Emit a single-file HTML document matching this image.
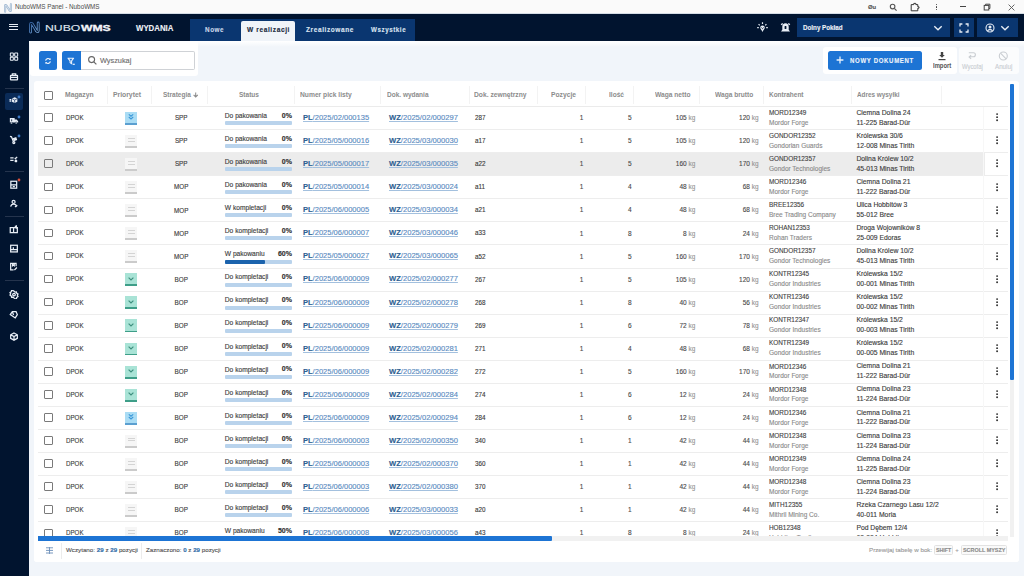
<!DOCTYPE html>
<html><head><meta charset="utf-8"><title>NuboWMS</title>
<style>html,body{margin:0;padding:0;width:1024px;height:576px;overflow:hidden;background:#eff3f8;font-family:'Liberation Sans', sans-serif;}
body{position:relative} b{font-weight:700} div{-webkit-text-stroke:0.12px currentColor}</style></head>
<body>
<div style="position:absolute;left:0.00px;top:0.00px;width:1024.00px;height:14.00px;background:#fafafa;"></div><div style="position:absolute;left:0.00px;top:13.20px;width:1024.00px;height:0.80px;background:#d5dde6;"></div><div style="position:absolute;left:0.00px;top:14.00px;width:1024.00px;height:27.30px;background:#01142f;"></div><div style="position:absolute;left:0.00px;top:41.00px;width:29.00px;height:535.00px;background:#01142f;"></div><div style="position:absolute;left:29.00px;top:41.30px;width:995.00px;height:534.70px;background:#f1f5fa;"></div><div style="position:absolute;left:29.00px;top:41.30px;width:995.00px;height:5.70px;background:linear-gradient(#ffffff,rgba(255,255,255,0));"></div><svg style="position:absolute;left:3px;top:2.5px" width="10" height="10" viewBox="0 0 10 10"><path d="M2.1 8.6V3Q2.1 1.4 3.4 2.5L6.6 7.5Q7.9 8.6 7.9 7V1.4" fill="none" stroke="#93afcc" stroke-width="2.1" stroke-linejoin="round" stroke-linecap="round"/><path d="M2.1 8.6V3Q2.1 1.4 3.4 2.5L6.6 7.5Q7.9 8.6 7.9 7V1.4" fill="none" stroke="#fafafa" stroke-width=".7" stroke-linejoin="round" stroke-linecap="round"/></svg><div style="position:absolute;left:14.75px;top:0.97px;height:12px;line-height:12px;font-family:'Liberation Sans', sans-serif;font-size:7px;font-weight:400;color:#4a4a4a;letter-spacing:0px;white-space:nowrap;-webkit-text-stroke:0;transform:scaleX(0.9022);transform-origin:0 0;">NuboWMS Panel - NuboWMS</div><div style="position:absolute;left:867.80px;top:1.29px;height:12px;line-height:12px;font-family:'Liberation Sans', sans-serif;font-size:5.5px;font-weight:700;color:#555;letter-spacing:0px;white-space:nowrap;;transform:scaleX(1.0732);transform-origin:0 0;">Øu</div><svg style="position:absolute;left:889px;top:3px" width="9" height="9" viewBox="0 0 9 9"><circle cx="3.6" cy="3.6" r="2.3" fill="none" stroke="#555" stroke-width="1.1"/><path d="M5.3 5.3l2.3 2.3" stroke="#555" stroke-width="1.2"/></svg><svg style="position:absolute;left:910px;top:2px" width="11" height="10" viewBox="0 0 11 10"><path d="M1.2 2.6h2.6v-1.2h2v1.2h2v2.2h1.2v1.4h-1.2v2.6h-6.6z" fill="none" stroke="#333" stroke-width="1"/></svg><div style="position:absolute;left:935.50px;top:3.70px;width:1.20px;height:1.20px;background:#333;border-radius:50%"></div><div style="position:absolute;left:935.50px;top:6.40px;width:1.20px;height:1.20px;background:#333;border-radius:50%"></div><div style="position:absolute;left:935.50px;top:9.10px;width:1.20px;height:1.20px;background:#333;border-radius:50%"></div><div style="position:absolute;left:960.00px;top:6.20px;width:6.00px;height:0.80px;background:#444;"></div><svg style="position:absolute;left:983px;top:3px" width="8" height="8" viewBox="0 0 8 8"><rect x="1.2" y="2.4" width="4.6" height="4.6" fill="none" stroke="#444" stroke-width="1"/><path d="M2.6 2.2V1.2h4.3v4.3H6" fill="none" stroke="#444" stroke-width="1"/></svg><svg style="position:absolute;left:1008px;top:3.5px" width="7" height="7" viewBox="0 0 7 7"><path d="M.6 .6l5.8 5.8M6.4 .6L.6 6.4" stroke="#555" stroke-width=".9"/></svg><div style="position:absolute;left:9.00px;top:23.85px;width:9.10px;height:1.10px;background:#e6ecf4;"></div><div style="position:absolute;left:9.00px;top:26.35px;width:9.10px;height:1.10px;background:#e6ecf4;"></div><div style="position:absolute;left:9.00px;top:28.85px;width:9.10px;height:1.10px;background:#e6ecf4;"></div><svg style="position:absolute;left:28px;top:21px" width="13" height="13" viewBox="0 0 13 13"><defs><linearGradient id="lg" x1="0" y1="0" x2="1" y2="1"><stop offset="0" stop-color="#3d6fb0"/><stop offset="1" stop-color="#7aa9dc"/></linearGradient></defs><path d="M2.6 11V3.4Q2.6 1.5 4.3 2.9L8.5 10Q10.2 11.5 10.2 9.6V2" fill="none" stroke="url(#lg)" stroke-width="2.8" stroke-linejoin="round" stroke-linecap="round"/><path d="M2.6 11V3.4Q2.6 1.5 4.3 2.9L8.5 10Q10.2 11.5 10.2 9.6V2" fill="none" stroke="#01142f" stroke-width="1.1" stroke-linejoin="round" stroke-linecap="round"/></svg><div style="position:absolute;left:45.00px;top:21.59px;height:12px;line-height:12px;font-family:'Liberation Sans', sans-serif;font-size:8.7px;font-weight:400;color:#dfe5ee;letter-spacing:0px;white-space:nowrap;;transform:scaleX(1.4058);transform-origin:0 0;">NUBO</div><div style="position:absolute;left:80.80px;top:21.59px;height:12px;line-height:12px;font-family:'Liberation Sans', sans-serif;font-size:8.7px;font-weight:700;color:#f4f6fa;letter-spacing:0px;white-space:nowrap;-webkit-text-stroke:0.3px currentColor;transform:scaleX(1.3987);transform-origin:0 0;">WMS</div><div style="position:absolute;left:135.60px;top:21.51px;height:12px;line-height:12px;font-family:'Liberation Sans', sans-serif;font-size:9.5px;font-weight:700;color:#eef2f7;letter-spacing:0px;white-space:nowrap;;transform:scaleX(0.8240);transform-origin:0 0;">WYDANIA</div><div style="position:absolute;left:190.30px;top:19.00px;width:224.30px;height:22.30px;background:#0a3670;"></div><div style="position:absolute;left:240.70px;top:21.00px;width:54.70px;height:20.30px;background:#f0f4f9;border-radius:2px 2px 0 0"></div><div style="position:absolute;left:204.80px;top:23.75px;height:12px;line-height:12px;font-family:'Liberation Sans', sans-serif;font-size:6.5px;font-weight:700;color:#c9d6e8;letter-spacing:0.6px;white-space:nowrap;;transform:scaleX(0.9722);transform-origin:0 0;">Nowe</div><div style="position:absolute;left:246.60px;top:24.25px;height:12px;line-height:12px;font-family:'Liberation Sans', sans-serif;font-size:6.5px;font-weight:700;color:#1b2a40;letter-spacing:0.6px;white-space:nowrap;;transform:scaleX(1.0092);transform-origin:0 0;">W realizacji</div><div style="position:absolute;left:306.00px;top:23.75px;height:12px;line-height:12px;font-family:'Liberation Sans', sans-serif;font-size:6.5px;font-weight:700;color:#dbe4f0;letter-spacing:0.6px;white-space:nowrap;;">Zrealizowane</div><div style="position:absolute;left:370.60px;top:23.75px;height:12px;line-height:12px;font-family:'Liberation Sans', sans-serif;font-size:6.5px;font-weight:700;color:#dbe4f0;letter-spacing:0.6px;white-space:nowrap;;transform:scaleX(0.9554);transform-origin:0 0;">Wszystkie</div><svg style="position:absolute;left:756px;top:21px" width="13" height="13" viewBox="0 0 13 13"><path d="M6.5 1.3v1.8M2.6 3.2l1.1 1.1M10.4 3.2L9.3 4.3M1.2 6.6h1.6M10.2 6.6h1.6" stroke="#e8eef6" stroke-width="1.2"/><path d="M4.2 6.8a2.3 2.3 0 1 1 4.6 0c0 1.2-1.4 2-2.3 4.1C5.6 8.8 4.2 8 4.2 6.8z" fill="#e8eef6"/><path d="M5.4 6.6l1.1 1 1.1-1" fill="none" stroke="#01142f" stroke-width=".9"/></svg><svg style="position:absolute;left:779px;top:21px" width="13" height="13" viewBox="0 0 13 13"><path d="M6.5 2.2c2 0 3.2 1.4 3.2 3.4v3.2l1.3 1.6H2l1.3-1.6V5.6c0-2 1.2-3.4 3.2-3.4z" fill="#e8eef6"/><path d="M2.2 3.8l1.5-1.4M10.8 3.8L9.3 2.4" stroke="#e8eef6" stroke-width="1.4"/><rect x="5.6" y="5" width="1.8" height="3" rx=".5" fill="#01142f"/></svg><div style="position:absolute;left:797.00px;top:18.00px;width:153.30px;height:19.00px;background:#0a3670;"></div><div style="position:absolute;left:803.40px;top:21.87px;height:12px;line-height:12px;font-family:'Liberation Sans', sans-serif;font-size:7px;font-weight:700;color:#eef2f8;letter-spacing:0px;white-space:nowrap;;transform:scaleX(0.8930);transform-origin:0 0;">Dolny Pokład</div><svg style="position:absolute;left:933px;top:25px" width="10" height="6" viewBox="0 0 10 6"><path d="M1.3 1.3L5 4.7l3.7-3.4" fill="none" stroke="#e8eef6" stroke-width="1.4"/></svg><div style="position:absolute;left:954.40px;top:18.00px;width:19.20px;height:19.00px;background:#0a3670;"></div><svg style="position:absolute;left:959px;top:22.5px" width="10" height="10" viewBox="0 0 10 10"><path d="M1 3.4V1h2.4M6.6 1H9v2.4M9 6.6V9H6.6M3.4 9H1V6.6" fill="none" stroke="#e8eef6" stroke-width="1.3"/></svg><div style="position:absolute;left:977.30px;top:18.00px;width:40.70px;height:19.00px;background:#0a3670;"></div><svg style="position:absolute;left:985px;top:22.5px" width="10" height="10" viewBox="0 0 10 10"><circle cx="5" cy="5" r="4" fill="none" stroke="#e8eef6" stroke-width="1.1"/><circle cx="5" cy="4" r="1.5" fill="#e8eef6"/><path d="M2.4 7.8c1.5-1.6 3.7-1.6 5.2 0" fill="none" stroke="#e8eef6" stroke-width="1.1"/></svg><svg style="position:absolute;left:1000px;top:25px" width="10" height="6" viewBox="0 0 10 6"><path d="M1.3 1.3L5 4.7l3.7-3.4" fill="none" stroke="#e8eef6" stroke-width="1.4"/></svg><div style="position:absolute;left:4.50px;top:93.20px;width:18.10px;height:16.70px;background:#0a2b58;border-radius:2px"></div><div style="position:absolute;left:5.00px;top:88.20px;width:19.00px;height:1.00px;background:#25344d;"></div><div style="position:absolute;left:5.00px;top:171.30px;width:19.00px;height:1.00px;background:#25344d;"></div><div style="position:absolute;left:5.00px;top:215.90px;width:19.00px;height:1.00px;background:#25344d;"></div><div style="position:absolute;left:5.00px;top:279.90px;width:19.00px;height:1.00px;background:#25344d;"></div><svg style="position:absolute;left:9px;top:52.20px" width="10" height="9.2" viewBox="0 0 12 11"><rect x="1.6" y="1.2" width="3.6" height="3.8" rx=".6" fill="none" stroke="#e8eef6" stroke-width="1.25"/><rect x="6.8" y="1.2" width="3.6" height="3.8" rx=".6" fill="none" stroke="#e8eef6" stroke-width="1.25"/><rect x="1.6" y="6.2" width="3.6" height="3.8" rx=".6" fill="none" stroke="#e8eef6" stroke-width="1.25"/><rect x="6.8" y="6.2" width="3.6" height="3.8" rx=".6" fill="none" stroke="#e8eef6" stroke-width="1.25"/></svg><svg style="position:absolute;left:9px;top:71.60px" width="10" height="9.2" viewBox="0 0 12 11"><rect x="1.8" y="4" width="8.4" height="5.5" rx=".6" fill="none" stroke="#e8eef6" stroke-width="1.5"/><path d="M4 4V2.2h4V4M1.8 6.3h8.4" fill="none" stroke="#e8eef6" stroke-width="1.5"/></svg><svg style="position:absolute;left:9px;top:96.40px" width="10" height="9.2" viewBox="0 0 12 11"><path d="M3.6 3.1L6.8 1.6l3.2 1.5v3.8L6.8 8.5 3.6 6.9z" fill="#e8eef6"/><path d="M3.8 3.3l3 1.5 3-1.5M6.8 4.8v3.4" fill="none" stroke="#0a2d5e" stroke-width=".8"/><path d="M.6 4.2h2.2M.6 6.2h2.2" fill="none" stroke="#e8eef6" stroke-width="1.5"/></svg><svg style="position:absolute;left:17px;top:94.70px" width="4" height="4" viewBox="0 0 4 4"><circle cx="2" cy="2" r="1.4" fill="#3d78c2"/></svg><svg style="position:absolute;left:9px;top:116.40px" width="10" height="9.2" viewBox="0 0 12 11"><path d="M1 2.5h5.8v5.3H1zM6.8 4.2h2.4l1.8 2v1.6H6.8z" fill="#e8eef6"/><path d="M3.2 4v2" stroke="#01142f" stroke-width="1"/><circle cx="3" cy="8.4" r="1.2" fill="#e8eef6" stroke="#01142f" stroke-width=".6"/><circle cx="8.6" cy="8.4" r="1.2" fill="#e8eef6" stroke="#01142f" stroke-width=".6"/></svg><svg style="position:absolute;left:17px;top:114.70px" width="4" height="4" viewBox="0 0 4 4"><circle cx="2" cy="2" r="1.4" fill="#3d78c2"/></svg><svg style="position:absolute;left:9px;top:135.40px" width="10" height="9.2" viewBox="0 0 12 11"><path d="M1.2 1.6l1.8.6 2.5 6.3" fill="none" stroke="#e8eef6" stroke-width="1.5"/><rect x="5" y="3.2" width="4.4" height="3.6" transform="rotate(-20 7 5)" fill="#e8eef6"/><circle cx="5.8" cy="9" r="1.2" fill="none" stroke="#e8eef6" stroke-width="1.5"/></svg><svg style="position:absolute;left:17px;top:133.70px" width="4" height="4" viewBox="0 0 4 4"><circle cx="2" cy="2" r="1.4" fill="#3d78c2"/></svg><svg style="position:absolute;left:9px;top:155.40px" width="10" height="9.2" viewBox="0 0 12 11"><path d="M1.5 3.5h4M1.5 6.5h4M6.8 3.4l1 1 2-2.2M7 5.8l2.6 2.6M9.6 5.8L7 8.4" fill="none" stroke="#e8eef6" stroke-width="1.5"/></svg><svg style="position:absolute;left:9px;top:179.70px" width="10" height="9.2" viewBox="0 0 12 11"><rect x="2.2" y="1.5" width="7" height="8.3" fill="none" stroke="#e8eef6" stroke-width="1.5"/><path d="M2.2 5.8h7M4.5 7.8h2.5" fill="none" stroke="#e8eef6" stroke-width="1.5"/></svg><svg style="position:absolute;left:17px;top:178.00px" width="4" height="4" viewBox="0 0 4 4"><circle cx="2" cy="2" r="1.4" fill="#d9503a"/></svg><svg style="position:absolute;left:9px;top:199.40px" width="10" height="9.2" viewBox="0 0 12 11"><circle cx="5.5" cy="3.5" r="1.8" fill="none" stroke="#e8eef6" stroke-width="1.5"/><path d="M2 9c.4-2 2-3 3.5-3s2.6.6 3 1.6M7.2 8.3l1 .9 1.7-1.7" fill="none" stroke="#e8eef6" stroke-width="1.5"/></svg><svg style="position:absolute;left:9px;top:225.00px" width="10" height="9.2" viewBox="0 0 12 11"><path d="M1.5 3h4v6h-4zM5.5 3h4.5v6H5.5M7 2l1.8-.8v3.3" fill="none" stroke="#e8eef6" stroke-width="1.5"/></svg><svg style="position:absolute;left:9px;top:243.70px" width="10" height="9.2" viewBox="0 0 12 11"><rect x="2" y="1.5" width="8" height="8" fill="none" stroke="#e8eef6" stroke-width="1.5"/><path d="M2 6.8h8M5.2 4v2.8" fill="none" stroke="#e8eef6" stroke-width="1.5"/></svg><svg style="position:absolute;left:9px;top:261.80px" width="10" height="9.2" viewBox="0 0 12 11"><path d="M8.5 5V1.5h-6.5v8h3.5" fill="none" stroke="#e8eef6" stroke-width="1.5"/><path d="M4.3 1.5v3l1-.8 1 .8v-3M6.5 9.6l3-3" fill="none" stroke="#e8eef6" stroke-width="1.5"/></svg><svg style="position:absolute;left:9px;top:289.70px" width="10" height="9.2" viewBox="0 0 12 11"><path d="M6 1.3l1.2 1.3 1.7-.3.4 1.7 1.5.9-.8 1.5.8 1.5-1.5.9-.4 1.7-1.7-.3L6 9.7 4.8 8.4l-1.7.3-.4-1.7-1.5-.9.8-1.5-.8-1.5 1.5-.9.4-1.7 1.7.3z" fill="none" stroke="#e8eef6" stroke-width="1.5"/><circle cx="6" cy="5.5" r="1.6" fill="none" stroke="#e8eef6" stroke-width="1.5"/></svg><svg style="position:absolute;left:9px;top:310.40px" width="10" height="9.2" viewBox="0 0 12 11"><path d="M1.5 5.5L4 2h4.5L10 5.5 7.5 9.5z" fill="none" stroke="#e8eef6" stroke-width="1.5"/><path d="M4 2l1.5 4" fill="none" stroke="#e8eef6" stroke-width="1.5"/></svg><svg style="position:absolute;left:9px;top:332.10px" width="10" height="9.2" viewBox="0 0 12 11"><path d="M6 1.2l4 2.1v4.4L6 9.8 2 7.7V3.3zM2 3.3l4 2.2 4-2.2M6 5.5v4.3" fill="none" stroke="#e8eef6" stroke-width="1.5"/></svg><div style="position:absolute;left:30.00px;top:41.30px;width:168.00px;height:34.70px;background:#ffffff;border-radius:0 0 3px 3px"></div><div style="position:absolute;left:38.60px;top:51.20px;width:18.70px;height:18.80px;background:#1d74d4;border-radius:2.5px"></div><svg style="position:absolute;left:44px;top:56.6px" width="8" height="8" viewBox="0 0 8 8"><path d="M1.6 3.6A2.5 2.5 0 0 1 6 2.4M6.4 4.4A2.5 2.5 0 0 1 2 5.6" fill="none" stroke="#e9f1fb" stroke-width="1.15"/><path d="M6.6 .9v2H4.6z" fill="#e9f1fb"/><path d="M1.4 7.1v-2h2z" fill="#e9f1fb"/></svg><div style="position:absolute;left:61.60px;top:51.20px;width:19.20px;height:19.20px;background:#1d74d4;border-radius:2.5px 0 0 2.5px"></div><svg style="position:absolute;left:67px;top:56.5px" width="9" height="9" viewBox="0 0 9 9"><path d="M1 1.2h5.6L4.6 3.9v2.8L3.1 5.6V3.9z" fill="none" stroke="#e9f1fb" stroke-width="1.1" stroke-linejoin="round"/><path d="M5.6 7.3h2.2" stroke="#e9f1fb" stroke-width="1.2"/></svg><div style="position:absolute;left:80.80px;top:51.30px;width:114.40px;height:19.10px;background:#ffffff;border:1px solid #cfd2d6;border-left:none;box-sizing:border-box;border-radius:0 2px 2px 0"></div><svg style="position:absolute;left:86.5px;top:55px" width="11" height="11" viewBox="0 0 11 11"><circle cx="4.6" cy="4.6" r="3" fill="none" stroke="#666" stroke-width="1.1"/><path d="M6.8 6.8l2.6 2.6" stroke="#666" stroke-width="1.2"/></svg><div style="position:absolute;left:100.20px;top:54.87px;height:12px;line-height:12px;font-family:'Liberation Sans', sans-serif;font-size:7px;font-weight:400;color:#6d6d6d;letter-spacing:0px;white-space:nowrap;;transform:scaleX(1.0472);transform-origin:0 0;">Wyszukaj</div><div style="position:absolute;left:823.00px;top:47.00px;width:133.50px;height:27.00px;background:#ffffff;border-radius:3px"></div><div style="position:absolute;left:959.00px;top:47.00px;width:59.50px;height:27.00px;background:#fbfcfd;border-radius:3px"></div><div style="position:absolute;left:828.00px;top:51.00px;width:93.50px;height:18.80px;background:#1d74d4;border-radius:2.5px"></div><svg style="position:absolute;left:835.6px;top:55.9px" width="8" height="8" viewBox="0 0 8 8"><path d="M4 .6v6.8M.6 4h6.8" stroke="#e9f1fb" stroke-width="1.3"/></svg><div style="position:absolute;left:849.50px;top:54.87px;height:12px;line-height:12px;font-family:'Liberation Sans', sans-serif;font-size:7px;font-weight:700;color:#eef4fb;letter-spacing:0.8px;white-space:nowrap;;transform:scaleX(0.8584);transform-origin:0 0;">NOWY DOKUMENT</div><svg style="position:absolute;left:937px;top:50.5px" width="10" height="10" viewBox="0 0 10 10"><path d="M3.8 1h2.4v3h1.6L5 6.8 2.2 4h1.6z" fill="#444"/><path d="M1.5 8.6h7" stroke="#444" stroke-width="1.2"/></svg><div style="position:absolute;left:932.70px;top:60.47px;height:12px;line-height:12px;font-family:'Liberation Sans', sans-serif;font-size:7px;font-weight:700;color:#555555;letter-spacing:0px;white-space:nowrap;-webkit-text-stroke:0;transform:scaleX(0.8402);transform-origin:0 0;">Import</div><svg style="position:absolute;left:967px;top:50.5px" width="10" height="10" viewBox="0 0 10 10"><path d="M1.8 1.8h4.6a2 2 0 0 1 0 4H2.3M4.1 4.1L2.1 6l2 1.9" fill="none" stroke="#c9cdd2" stroke-width="1.1"/></svg><div style="position:absolute;left:961.60px;top:60.65px;height:12px;line-height:12px;font-family:'Liberation Sans', sans-serif;font-size:6.5px;font-weight:400;color:#c9cdd2;letter-spacing:0px;white-space:nowrap;;transform:scaleX(0.9019);transform-origin:0 0;">Wycofaj</div><svg style="position:absolute;left:997.5px;top:50.5px" width="11" height="10" viewBox="0 0 11 10"><circle cx="5.3" cy="5" r="4" fill="none" stroke="#c9cdd2" stroke-width="1.1"/><path d="M2.5 2.2l5.6 5.6" stroke="#c9cdd2" stroke-width="1.1"/></svg><div style="position:absolute;left:994.60px;top:60.65px;height:12px;line-height:12px;font-family:'Liberation Sans', sans-serif;font-size:6.5px;font-weight:400;color:#c9cdd2;letter-spacing:0px;white-space:nowrap;;transform:scaleX(0.9570);transform-origin:0 0;">Anuluj</div><div style="position:absolute;left:33.50px;top:81.40px;width:985.00px;height:480.60px;background:#ffffff;border-radius:3px"></div><div style="position:absolute;left:38.00px;top:106.00px;width:970.00px;height:1.20px;background:#ebebeb;"></div><div style="position:absolute;left:43.90px;top:91.10px;width:8.80px;height:8.60px;background:transparent;border:1.3px solid #7a7a7a;box-sizing:border-box;border-radius:1px"></div><div style="position:absolute;left:107.00px;top:86.00px;width:1.00px;height:18.00px;background:#f3f3f3;"></div><div style="position:absolute;left:151.25px;top:86.00px;width:1.00px;height:18.00px;background:#f3f3f3;"></div><div style="position:absolute;left:207.00px;top:86.00px;width:1.00px;height:18.00px;background:#f3f3f3;"></div><div style="position:absolute;left:294.25px;top:86.00px;width:1.00px;height:18.00px;background:#f3f3f3;"></div><div style="position:absolute;left:380.00px;top:86.00px;width:1.00px;height:18.00px;background:#f3f3f3;"></div><div style="position:absolute;left:468.75px;top:86.00px;width:1.00px;height:18.00px;background:#f3f3f3;"></div><div style="position:absolute;left:536.75px;top:86.00px;width:1.00px;height:18.00px;background:#f3f3f3;"></div><div style="position:absolute;left:585.25px;top:86.00px;width:1.00px;height:18.00px;background:#f3f3f3;"></div><div style="position:absolute;left:632.75px;top:86.00px;width:1.00px;height:18.00px;background:#f3f3f3;"></div><div style="position:absolute;left:699.00px;top:86.00px;width:1.00px;height:18.00px;background:#f3f3f3;"></div><div style="position:absolute;left:762.75px;top:86.00px;width:1.00px;height:18.00px;background:#f3f3f3;"></div><div style="position:absolute;left:850.75px;top:86.00px;width:1.00px;height:18.00px;background:#f3f3f3;"></div><div style="position:absolute;left:941.25px;top:86.00px;width:1.00px;height:18.00px;background:#f3f3f3;"></div><div style="position:absolute;left:65.00px;top:88.84px;height:12px;line-height:12px;font-family:'Liberation Sans', sans-serif;font-size:6.8px;font-weight:700;color:#8c8c8c;letter-spacing:0px;white-space:nowrap;-webkit-text-stroke:0;">Magazyn</div><div style="position:absolute;left:113.00px;top:88.84px;height:12px;line-height:12px;font-family:'Liberation Sans', sans-serif;font-size:6.8px;font-weight:700;color:#8c8c8c;letter-spacing:0px;white-space:nowrap;-webkit-text-stroke:0;">Priorytet</div><div style="position:absolute;left:162.50px;top:88.84px;height:12px;line-height:12px;font-family:'Liberation Sans', sans-serif;font-size:6.8px;font-weight:700;color:#8c8c8c;letter-spacing:0px;white-space:nowrap;-webkit-text-stroke:0;transform:scaleX(0.9555);transform-origin:0 0;">Strategia</div><div style="position:absolute;left:238.75px;top:88.84px;height:12px;line-height:12px;font-family:'Liberation Sans', sans-serif;font-size:6.8px;font-weight:700;color:#8c8c8c;letter-spacing:0px;white-space:nowrap;-webkit-text-stroke:0;transform:scaleX(0.9624);transform-origin:0 0;">Status</div><div style="position:absolute;left:299.75px;top:88.84px;height:12px;line-height:12px;font-family:'Liberation Sans', sans-serif;font-size:6.8px;font-weight:700;color:#8c8c8c;letter-spacing:0px;white-space:nowrap;-webkit-text-stroke:0;transform:scaleX(0.9854);transform-origin:0 0;">Numer pick listy</div><div style="position:absolute;left:386.50px;top:88.84px;height:12px;line-height:12px;font-family:'Liberation Sans', sans-serif;font-size:6.8px;font-weight:700;color:#8c8c8c;letter-spacing:0px;white-space:nowrap;-webkit-text-stroke:0;transform:scaleX(0.9554);transform-origin:0 0;">Dok. wydania</div><div style="position:absolute;left:474.00px;top:88.84px;height:12px;line-height:12px;font-family:'Liberation Sans', sans-serif;font-size:6.8px;font-weight:700;color:#8c8c8c;letter-spacing:0px;white-space:nowrap;-webkit-text-stroke:0;transform:scaleX(0.9856);transform-origin:0 0;">Dok. zewnętrzny</div><div style="position:absolute;left:550.75px;top:88.84px;height:12px;line-height:12px;font-family:'Liberation Sans', sans-serif;font-size:6.8px;font-weight:700;color:#8c8c8c;letter-spacing:0px;white-space:nowrap;-webkit-text-stroke:0;transform:scaleX(0.9877);transform-origin:0 0;">Pozycje</div><div style="position:absolute;left:609.00px;top:88.84px;height:12px;line-height:12px;font-family:'Liberation Sans', sans-serif;font-size:6.8px;font-weight:700;color:#8c8c8c;letter-spacing:0px;white-space:nowrap;-webkit-text-stroke:0;transform:scaleX(0.9677);transform-origin:0 0;">Ilość</div><div style="position:absolute;left:654.50px;top:88.84px;height:12px;line-height:12px;font-family:'Liberation Sans', sans-serif;font-size:6.8px;font-weight:700;color:#8c8c8c;letter-spacing:0px;white-space:nowrap;-webkit-text-stroke:0;transform:scaleX(0.9759);transform-origin:0 0;">Waga netto</div><div style="position:absolute;left:715.00px;top:88.84px;height:12px;line-height:12px;font-family:'Liberation Sans', sans-serif;font-size:6.8px;font-weight:700;color:#8c8c8c;letter-spacing:0px;white-space:nowrap;-webkit-text-stroke:0;transform:scaleX(0.9710);transform-origin:0 0;">Waga brutto</div><div style="position:absolute;left:769.00px;top:88.84px;height:12px;line-height:12px;font-family:'Liberation Sans', sans-serif;font-size:6.8px;font-weight:700;color:#8c8c8c;letter-spacing:0px;white-space:nowrap;-webkit-text-stroke:0;transform:scaleX(0.9517);transform-origin:0 0;">Kontrahent</div><div style="position:absolute;left:856.75px;top:88.84px;height:12px;line-height:12px;font-family:'Liberation Sans', sans-serif;font-size:6.8px;font-weight:700;color:#8c8c8c;letter-spacing:0px;white-space:nowrap;-webkit-text-stroke:0;transform:scaleX(0.9373);transform-origin:0 0;">Adres wysyłki</div><svg style="position:absolute;left:193px;top:92px" width="5.4" height="5.6" viewBox="0 0 5.4 5.6"><path d="M2.7 .4v4.5M.6 2.9l2.1 2.1 2.1-2.1" fill="none" stroke="#8c8c8c" stroke-width="1.05"/></svg><div style="position:absolute;left:43.90px;top:113.30px;width:8.80px;height:8.60px;background:transparent;border:1.3px solid #7a7a7a;box-sizing:border-box;border-radius:1px"></div><div style="position:absolute;left:65.60px;top:111.97px;height:12px;line-height:12px;font-family:'Liberation Sans', sans-serif;font-size:7px;font-weight:400;color:#3a3a3a;letter-spacing:0px;white-space:nowrap;;transform:scaleX(0.8819);transform-origin:0 0;">DPOK</div><div style="position:absolute;left:125.10px;top:111.80px;width:11.90px;height:11.30px;background:#aadcf4;"></div><div style="position:absolute;left:125.10px;top:122.90px;width:11.90px;height:1.90px;background:#5b9fd0;"></div><svg style="position:absolute;left:127px;top:112.80px" width="8" height="8" viewBox="0 0 8 8"><path d="M1.8 1.3L4 3.2l2.2-1.9M1.8 4L4 5.9 6.2 4" fill="none" stroke="#3b98d8" stroke-width="1.1"/></svg><div style="position:absolute;left:174.90px;top:112.22px;height:12px;line-height:12px;font-family:'Liberation Sans', sans-serif;font-size:6.3px;font-weight:400;color:#3a3a3a;letter-spacing:0px;white-space:nowrap;;">SPP</div><div style="position:absolute;left:224.80px;top:109.80px;height:12px;line-height:12px;font-family:'Liberation Sans', sans-serif;font-size:6.65px;font-weight:400;color:#3a3a3a;letter-spacing:0px;white-space:nowrap;;">Do pakowania</div><div style="position:absolute;left:281.77px;top:109.67px;height:12px;line-height:12px;font-family:'Liberation Sans', sans-serif;font-size:7px;font-weight:700;color:#2e2e2e;letter-spacing:0px;white-space:nowrap;;">0%</div><div style="position:absolute;left:224.80px;top:121.10px;width:67.10px;height:4.00px;background:#b9d3ec;border-radius:1px"></div><div style="position:absolute;left:302.70px;top:111.97px;height:12px;line-height:12px;font-family:'Liberation Sans', sans-serif;font-size:7px;font-weight:400;color:#5a8bbf;letter-spacing:0px;white-space:nowrap;text-decoration:underline;text-decoration-color:#a3c0de;text-decoration-thickness:0.7px;text-underline-offset:0.6px;transform:scaleX(1.0745);transform-origin:0 0;"><b style="color:#2e5f92">PL</b>/2025/02/000135</div><div style="position:absolute;left:389.10px;top:111.97px;height:12px;line-height:12px;font-family:'Liberation Sans', sans-serif;font-size:7px;font-weight:400;color:#5a8bbf;letter-spacing:0px;white-space:nowrap;text-decoration:underline;text-decoration-color:#a3c0de;text-decoration-thickness:0.7px;text-underline-offset:0.6px;transform:scaleX(1.0858);transform-origin:0 0;"><b style="color:#2e5f92">WZ</b>/2025/02/000297</div><div style="position:absolute;left:475.00px;top:112.12px;height:12px;line-height:12px;font-family:'Liberation Sans', sans-serif;font-size:6.3px;font-weight:400;color:#3a3a3a;letter-spacing:0px;white-space:nowrap;;">287</div><div style="position:absolute;left:579.77px;top:112.15px;height:12px;line-height:12px;font-family:'Liberation Sans', sans-serif;font-size:6.5px;font-weight:400;color:#4a4a4a;letter-spacing:0px;white-space:nowrap;;">1</div><div style="position:absolute;left:627.88px;top:112.15px;height:12px;line-height:12px;font-family:'Liberation Sans', sans-serif;font-size:6.5px;font-weight:400;color:#4a4a4a;letter-spacing:0px;white-space:nowrap;;">5</div><div style="position:absolute;left:675.79px;top:112.15px;height:12px;line-height:12px;font-family:'Liberation Sans', sans-serif;font-size:6.5px;font-weight:400;color:#4a4a4a;letter-spacing:0px;white-space:nowrap;;">105 <span style="color:#939393;font-size:6.4px">kg</span></div><div style="position:absolute;left:739.09px;top:112.15px;height:12px;line-height:12px;font-family:'Liberation Sans', sans-serif;font-size:6.5px;font-weight:400;color:#4a4a4a;letter-spacing:0px;white-space:nowrap;;">120 <span style="color:#939393;font-size:6.4px">kg</span></div><div style="position:absolute;left:769.00px;top:106.78px;height:12px;line-height:12px;font-family:'Liberation Sans', sans-serif;font-size:6.4px;font-weight:400;color:#3f3f3f;letter-spacing:0px;white-space:nowrap;;">MORD12349</div><div style="position:absolute;left:769.00px;top:116.65px;height:12px;line-height:12px;font-family:'Liberation Sans', sans-serif;font-size:6.5px;font-weight:400;color:#8a8a8a;letter-spacing:0px;white-space:nowrap;;">Mordor Forge</div><div style="position:absolute;left:856.40px;top:106.64px;height:12px;line-height:12px;font-family:'Liberation Sans', sans-serif;font-size:6.8px;font-weight:400;color:#3a3a3a;letter-spacing:0px;white-space:nowrap;;">Ciemna Dolina 24</div><div style="position:absolute;left:856.40px;top:116.54px;height:12px;line-height:12px;font-family:'Liberation Sans', sans-serif;font-size:6.8px;font-weight:400;color:#3a3a3a;letter-spacing:0px;white-space:nowrap;;">11-225 Barad-Dûr</div><svg style="position:absolute;left:995px;top:112.30px" width="4.4" height="10" viewBox="0 0 4.4 10"><circle cx="2.1" cy="2.1" r=".95" fill="#333"/><circle cx="2.1" cy="5.15" r=".95" fill="#333"/><circle cx="2.1" cy="8.2" r=".95" fill="#333"/></svg><div style="position:absolute;left:38.00px;top:129.12px;width:970.00px;height:1.00px;background:#ededed;"></div><div style="position:absolute;left:43.90px;top:136.37px;width:8.80px;height:8.60px;background:transparent;border:1.3px solid #7a7a7a;box-sizing:border-box;border-radius:1px"></div><div style="position:absolute;left:65.60px;top:135.04px;height:12px;line-height:12px;font-family:'Liberation Sans', sans-serif;font-size:7px;font-weight:400;color:#3a3a3a;letter-spacing:0px;white-space:nowrap;;transform:scaleX(0.8819);transform-origin:0 0;">DPOK</div><div style="position:absolute;left:125.10px;top:134.87px;width:11.90px;height:11.30px;background:#f6f6f6;"></div><div style="position:absolute;left:125.10px;top:145.97px;width:11.90px;height:1.90px;background:#cbcbcb;"></div><div style="position:absolute;left:128.00px;top:137.87px;width:7.00px;height:1.00px;background:#d4d4d4;"></div><div style="position:absolute;left:128.00px;top:140.57px;width:7.00px;height:1.00px;background:#d4d4d4;"></div><div style="position:absolute;left:174.90px;top:135.29px;height:12px;line-height:12px;font-family:'Liberation Sans', sans-serif;font-size:6.3px;font-weight:400;color:#3a3a3a;letter-spacing:0px;white-space:nowrap;;">SPP</div><div style="position:absolute;left:224.80px;top:132.87px;height:12px;line-height:12px;font-family:'Liberation Sans', sans-serif;font-size:6.65px;font-weight:400;color:#3a3a3a;letter-spacing:0px;white-space:nowrap;;">Do pakowania</div><div style="position:absolute;left:281.77px;top:132.74px;height:12px;line-height:12px;font-family:'Liberation Sans', sans-serif;font-size:7px;font-weight:700;color:#2e2e2e;letter-spacing:0px;white-space:nowrap;;">0%</div><div style="position:absolute;left:224.80px;top:144.17px;width:67.10px;height:4.00px;background:#b9d3ec;border-radius:1px"></div><div style="position:absolute;left:302.70px;top:135.04px;height:12px;line-height:12px;font-family:'Liberation Sans', sans-serif;font-size:7px;font-weight:400;color:#5a8bbf;letter-spacing:0px;white-space:nowrap;text-decoration:underline;text-decoration-color:#a3c0de;text-decoration-thickness:0.7px;text-underline-offset:0.6px;transform:scaleX(1.0745);transform-origin:0 0;"><b style="color:#2e5f92">PL</b>/2025/05/000016</div><div style="position:absolute;left:389.10px;top:135.04px;height:12px;line-height:12px;font-family:'Liberation Sans', sans-serif;font-size:7px;font-weight:400;color:#5a8bbf;letter-spacing:0px;white-space:nowrap;text-decoration:underline;text-decoration-color:#a3c0de;text-decoration-thickness:0.7px;text-underline-offset:0.6px;transform:scaleX(1.0858);transform-origin:0 0;"><b style="color:#2e5f92">WZ</b>/2025/03/000030</div><div style="position:absolute;left:475.00px;top:135.19px;height:12px;line-height:12px;font-family:'Liberation Sans', sans-serif;font-size:6.3px;font-weight:400;color:#3a3a3a;letter-spacing:0px;white-space:nowrap;;">a17</div><div style="position:absolute;left:579.77px;top:135.22px;height:12px;line-height:12px;font-family:'Liberation Sans', sans-serif;font-size:6.5px;font-weight:400;color:#4a4a4a;letter-spacing:0px;white-space:nowrap;;">1</div><div style="position:absolute;left:627.88px;top:135.22px;height:12px;line-height:12px;font-family:'Liberation Sans', sans-serif;font-size:6.5px;font-weight:400;color:#4a4a4a;letter-spacing:0px;white-space:nowrap;;">5</div><div style="position:absolute;left:675.79px;top:135.22px;height:12px;line-height:12px;font-family:'Liberation Sans', sans-serif;font-size:6.5px;font-weight:400;color:#4a4a4a;letter-spacing:0px;white-space:nowrap;;">105 <span style="color:#939393;font-size:6.4px">kg</span></div><div style="position:absolute;left:739.09px;top:135.22px;height:12px;line-height:12px;font-family:'Liberation Sans', sans-serif;font-size:6.5px;font-weight:400;color:#4a4a4a;letter-spacing:0px;white-space:nowrap;;">120 <span style="color:#939393;font-size:6.4px">kg</span></div><div style="position:absolute;left:769.00px;top:129.85px;height:12px;line-height:12px;font-family:'Liberation Sans', sans-serif;font-size:6.4px;font-weight:400;color:#3f3f3f;letter-spacing:0px;white-space:nowrap;;">GONDOR12352</div><div style="position:absolute;left:769.00px;top:139.72px;height:12px;line-height:12px;font-family:'Liberation Sans', sans-serif;font-size:6.5px;font-weight:400;color:#8a8a8a;letter-spacing:0px;white-space:nowrap;;">Gondorian Guards</div><div style="position:absolute;left:856.40px;top:129.71px;height:12px;line-height:12px;font-family:'Liberation Sans', sans-serif;font-size:6.8px;font-weight:400;color:#3a3a3a;letter-spacing:0px;white-space:nowrap;;">Królewska 30/6</div><div style="position:absolute;left:856.40px;top:139.61px;height:12px;line-height:12px;font-family:'Liberation Sans', sans-serif;font-size:6.8px;font-weight:400;color:#3a3a3a;letter-spacing:0px;white-space:nowrap;;">12-008 Minas Tirith</div><svg style="position:absolute;left:995px;top:135.37px" width="4.4" height="10" viewBox="0 0 4.4 10"><circle cx="2.1" cy="2.1" r=".95" fill="#333"/><circle cx="2.1" cy="5.15" r=".95" fill="#333"/><circle cx="2.1" cy="8.2" r=".95" fill="#333"/></svg><div style="position:absolute;left:38.00px;top:152.64px;width:946.75px;height:23.07px;background:#ececec;"></div><div style="position:absolute;left:38.00px;top:152.19px;width:970.00px;height:1.00px;background:#ededed;"></div><div style="position:absolute;left:43.90px;top:159.44px;width:8.80px;height:8.60px;background:transparent;border:1.3px solid #7a7a7a;box-sizing:border-box;border-radius:1px"></div><div style="position:absolute;left:65.60px;top:158.11px;height:12px;line-height:12px;font-family:'Liberation Sans', sans-serif;font-size:7px;font-weight:400;color:#3a3a3a;letter-spacing:0px;white-space:nowrap;;transform:scaleX(0.8819);transform-origin:0 0;">DPOK</div><div style="position:absolute;left:125.10px;top:157.94px;width:11.90px;height:11.30px;background:#f6f6f6;"></div><div style="position:absolute;left:125.10px;top:169.04px;width:11.90px;height:1.90px;background:#cbcbcb;"></div><div style="position:absolute;left:128.00px;top:160.94px;width:7.00px;height:1.00px;background:#d4d4d4;"></div><div style="position:absolute;left:128.00px;top:163.64px;width:7.00px;height:1.00px;background:#d4d4d4;"></div><div style="position:absolute;left:174.90px;top:158.36px;height:12px;line-height:12px;font-family:'Liberation Sans', sans-serif;font-size:6.3px;font-weight:400;color:#3a3a3a;letter-spacing:0px;white-space:nowrap;;">SPP</div><div style="position:absolute;left:224.80px;top:155.94px;height:12px;line-height:12px;font-family:'Liberation Sans', sans-serif;font-size:6.65px;font-weight:400;color:#3a3a3a;letter-spacing:0px;white-space:nowrap;;">Do pakowania</div><div style="position:absolute;left:281.77px;top:155.81px;height:12px;line-height:12px;font-family:'Liberation Sans', sans-serif;font-size:7px;font-weight:700;color:#2e2e2e;letter-spacing:0px;white-space:nowrap;;">0%</div><div style="position:absolute;left:224.80px;top:167.24px;width:67.10px;height:4.00px;background:#b9d3ec;border-radius:1px"></div><div style="position:absolute;left:302.70px;top:158.11px;height:12px;line-height:12px;font-family:'Liberation Sans', sans-serif;font-size:7px;font-weight:400;color:#5a8bbf;letter-spacing:0px;white-space:nowrap;text-decoration:underline;text-decoration-color:#a3c0de;text-decoration-thickness:0.7px;text-underline-offset:0.6px;transform:scaleX(1.0745);transform-origin:0 0;"><b style="color:#2e5f92">PL</b>/2025/05/000017</div><div style="position:absolute;left:389.10px;top:158.11px;height:12px;line-height:12px;font-family:'Liberation Sans', sans-serif;font-size:7px;font-weight:400;color:#5a8bbf;letter-spacing:0px;white-space:nowrap;text-decoration:underline;text-decoration-color:#a3c0de;text-decoration-thickness:0.7px;text-underline-offset:0.6px;transform:scaleX(1.0858);transform-origin:0 0;"><b style="color:#2e5f92">WZ</b>/2025/03/000035</div><div style="position:absolute;left:475.00px;top:158.26px;height:12px;line-height:12px;font-family:'Liberation Sans', sans-serif;font-size:6.3px;font-weight:400;color:#3a3a3a;letter-spacing:0px;white-space:nowrap;;">a22</div><div style="position:absolute;left:579.77px;top:158.29px;height:12px;line-height:12px;font-family:'Liberation Sans', sans-serif;font-size:6.5px;font-weight:400;color:#4a4a4a;letter-spacing:0px;white-space:nowrap;;">1</div><div style="position:absolute;left:627.88px;top:158.29px;height:12px;line-height:12px;font-family:'Liberation Sans', sans-serif;font-size:6.5px;font-weight:400;color:#4a4a4a;letter-spacing:0px;white-space:nowrap;;">5</div><div style="position:absolute;left:675.79px;top:158.29px;height:12px;line-height:12px;font-family:'Liberation Sans', sans-serif;font-size:6.5px;font-weight:400;color:#4a4a4a;letter-spacing:0px;white-space:nowrap;;">160 <span style="color:#939393;font-size:6.4px">kg</span></div><div style="position:absolute;left:739.09px;top:158.29px;height:12px;line-height:12px;font-family:'Liberation Sans', sans-serif;font-size:6.5px;font-weight:400;color:#4a4a4a;letter-spacing:0px;white-space:nowrap;;">170 <span style="color:#939393;font-size:6.4px">kg</span></div><div style="position:absolute;left:769.00px;top:152.92px;height:12px;line-height:12px;font-family:'Liberation Sans', sans-serif;font-size:6.4px;font-weight:400;color:#3f3f3f;letter-spacing:0px;white-space:nowrap;;">GONDOR12357</div><div style="position:absolute;left:769.00px;top:162.79px;height:12px;line-height:12px;font-family:'Liberation Sans', sans-serif;font-size:6.5px;font-weight:400;color:#8a8a8a;letter-spacing:0px;white-space:nowrap;;">Gondor Technologies</div><div style="position:absolute;left:856.40px;top:152.78px;height:12px;line-height:12px;font-family:'Liberation Sans', sans-serif;font-size:6.8px;font-weight:400;color:#3a3a3a;letter-spacing:0px;white-space:nowrap;;">Dolina Królew 10/2</div><div style="position:absolute;left:856.40px;top:162.68px;height:12px;line-height:12px;font-family:'Liberation Sans', sans-serif;font-size:6.8px;font-weight:400;color:#3a3a3a;letter-spacing:0px;white-space:nowrap;;">45-013 Minas Tirith</div><svg style="position:absolute;left:995px;top:158.44px" width="4.4" height="10" viewBox="0 0 4.4 10"><circle cx="2.1" cy="2.1" r=".95" fill="#333"/><circle cx="2.1" cy="5.15" r=".95" fill="#333"/><circle cx="2.1" cy="8.2" r=".95" fill="#333"/></svg><div style="position:absolute;left:38.00px;top:175.26px;width:970.00px;height:1.00px;background:#ededed;"></div><div style="position:absolute;left:43.90px;top:182.51px;width:8.80px;height:8.60px;background:transparent;border:1.3px solid #7a7a7a;box-sizing:border-box;border-radius:1px"></div><div style="position:absolute;left:65.60px;top:181.18px;height:12px;line-height:12px;font-family:'Liberation Sans', sans-serif;font-size:7px;font-weight:400;color:#3a3a3a;letter-spacing:0px;white-space:nowrap;;transform:scaleX(0.8819);transform-origin:0 0;">DPOK</div><div style="position:absolute;left:125.10px;top:181.01px;width:11.90px;height:11.30px;background:#f6f6f6;"></div><div style="position:absolute;left:125.10px;top:192.11px;width:11.90px;height:1.90px;background:#cbcbcb;"></div><div style="position:absolute;left:128.00px;top:184.01px;width:7.00px;height:1.00px;background:#d4d4d4;"></div><div style="position:absolute;left:128.00px;top:186.71px;width:7.00px;height:1.00px;background:#d4d4d4;"></div><div style="position:absolute;left:174.03px;top:181.43px;height:12px;line-height:12px;font-family:'Liberation Sans', sans-serif;font-size:6.3px;font-weight:400;color:#3a3a3a;letter-spacing:0px;white-space:nowrap;;">MOP</div><div style="position:absolute;left:224.80px;top:179.01px;height:12px;line-height:12px;font-family:'Liberation Sans', sans-serif;font-size:6.65px;font-weight:400;color:#3a3a3a;letter-spacing:0px;white-space:nowrap;;">Do pakowania</div><div style="position:absolute;left:281.77px;top:178.88px;height:12px;line-height:12px;font-family:'Liberation Sans', sans-serif;font-size:7px;font-weight:700;color:#2e2e2e;letter-spacing:0px;white-space:nowrap;;">0%</div><div style="position:absolute;left:224.80px;top:190.31px;width:67.10px;height:4.00px;background:#b9d3ec;border-radius:1px"></div><div style="position:absolute;left:302.70px;top:181.18px;height:12px;line-height:12px;font-family:'Liberation Sans', sans-serif;font-size:7px;font-weight:400;color:#5a8bbf;letter-spacing:0px;white-space:nowrap;text-decoration:underline;text-decoration-color:#a3c0de;text-decoration-thickness:0.7px;text-underline-offset:0.6px;transform:scaleX(1.0745);transform-origin:0 0;"><b style="color:#2e5f92">PL</b>/2025/05/000014</div><div style="position:absolute;left:389.10px;top:181.18px;height:12px;line-height:12px;font-family:'Liberation Sans', sans-serif;font-size:7px;font-weight:400;color:#5a8bbf;letter-spacing:0px;white-space:nowrap;text-decoration:underline;text-decoration-color:#a3c0de;text-decoration-thickness:0.7px;text-underline-offset:0.6px;transform:scaleX(1.0858);transform-origin:0 0;"><b style="color:#2e5f92">WZ</b>/2025/03/000024</div><div style="position:absolute;left:475.00px;top:181.33px;height:12px;line-height:12px;font-family:'Liberation Sans', sans-serif;font-size:6.3px;font-weight:400;color:#3a3a3a;letter-spacing:0px;white-space:nowrap;;">a11</div><div style="position:absolute;left:579.77px;top:181.36px;height:12px;line-height:12px;font-family:'Liberation Sans', sans-serif;font-size:6.5px;font-weight:400;color:#4a4a4a;letter-spacing:0px;white-space:nowrap;;">1</div><div style="position:absolute;left:627.88px;top:181.36px;height:12px;line-height:12px;font-family:'Liberation Sans', sans-serif;font-size:6.5px;font-weight:400;color:#4a4a4a;letter-spacing:0px;white-space:nowrap;;">4</div><div style="position:absolute;left:679.40px;top:181.36px;height:12px;line-height:12px;font-family:'Liberation Sans', sans-serif;font-size:6.5px;font-weight:400;color:#4a4a4a;letter-spacing:0px;white-space:nowrap;;">48 <span style="color:#939393;font-size:6.4px">kg</span></div><div style="position:absolute;left:742.70px;top:181.36px;height:12px;line-height:12px;font-family:'Liberation Sans', sans-serif;font-size:6.5px;font-weight:400;color:#4a4a4a;letter-spacing:0px;white-space:nowrap;;">68 <span style="color:#939393;font-size:6.4px">kg</span></div><div style="position:absolute;left:769.00px;top:175.99px;height:12px;line-height:12px;font-family:'Liberation Sans', sans-serif;font-size:6.4px;font-weight:400;color:#3f3f3f;letter-spacing:0px;white-space:nowrap;;">MORD12346</div><div style="position:absolute;left:769.00px;top:185.86px;height:12px;line-height:12px;font-family:'Liberation Sans', sans-serif;font-size:6.5px;font-weight:400;color:#8a8a8a;letter-spacing:0px;white-space:nowrap;;">Mordor Forge</div><div style="position:absolute;left:856.40px;top:175.85px;height:12px;line-height:12px;font-family:'Liberation Sans', sans-serif;font-size:6.8px;font-weight:400;color:#3a3a3a;letter-spacing:0px;white-space:nowrap;;">Ciemna Dolina 21</div><div style="position:absolute;left:856.40px;top:185.75px;height:12px;line-height:12px;font-family:'Liberation Sans', sans-serif;font-size:6.8px;font-weight:400;color:#3a3a3a;letter-spacing:0px;white-space:nowrap;;">11-222 Barad-Dûr</div><svg style="position:absolute;left:995px;top:181.51px" width="4.4" height="10" viewBox="0 0 4.4 10"><circle cx="2.1" cy="2.1" r=".95" fill="#333"/><circle cx="2.1" cy="5.15" r=".95" fill="#333"/><circle cx="2.1" cy="8.2" r=".95" fill="#333"/></svg><div style="position:absolute;left:38.00px;top:198.33px;width:970.00px;height:1.00px;background:#ededed;"></div><div style="position:absolute;left:43.90px;top:205.58px;width:8.80px;height:8.60px;background:transparent;border:1.3px solid #7a7a7a;box-sizing:border-box;border-radius:1px"></div><div style="position:absolute;left:65.60px;top:204.25px;height:12px;line-height:12px;font-family:'Liberation Sans', sans-serif;font-size:7px;font-weight:400;color:#3a3a3a;letter-spacing:0px;white-space:nowrap;;transform:scaleX(0.8819);transform-origin:0 0;">DPOK</div><div style="position:absolute;left:125.10px;top:204.08px;width:11.90px;height:11.30px;background:#f6f6f6;"></div><div style="position:absolute;left:125.10px;top:215.18px;width:11.90px;height:1.90px;background:#cbcbcb;"></div><div style="position:absolute;left:128.00px;top:207.08px;width:7.00px;height:1.00px;background:#d4d4d4;"></div><div style="position:absolute;left:128.00px;top:209.78px;width:7.00px;height:1.00px;background:#d4d4d4;"></div><div style="position:absolute;left:174.03px;top:204.50px;height:12px;line-height:12px;font-family:'Liberation Sans', sans-serif;font-size:6.3px;font-weight:400;color:#3a3a3a;letter-spacing:0px;white-space:nowrap;;">MOP</div><div style="position:absolute;left:224.80px;top:202.08px;height:12px;line-height:12px;font-family:'Liberation Sans', sans-serif;font-size:6.65px;font-weight:400;color:#3a3a3a;letter-spacing:0px;white-space:nowrap;;">W kompletacji</div><div style="position:absolute;left:281.77px;top:201.95px;height:12px;line-height:12px;font-family:'Liberation Sans', sans-serif;font-size:7px;font-weight:700;color:#2e2e2e;letter-spacing:0px;white-space:nowrap;;">0%</div><div style="position:absolute;left:224.80px;top:213.38px;width:67.10px;height:4.00px;background:#b9d3ec;border-radius:1px"></div><div style="position:absolute;left:302.70px;top:204.25px;height:12px;line-height:12px;font-family:'Liberation Sans', sans-serif;font-size:7px;font-weight:400;color:#5a8bbf;letter-spacing:0px;white-space:nowrap;text-decoration:underline;text-decoration-color:#a3c0de;text-decoration-thickness:0.7px;text-underline-offset:0.6px;transform:scaleX(1.0745);transform-origin:0 0;"><b style="color:#2e5f92">PL</b>/2025/06/000005</div><div style="position:absolute;left:389.10px;top:204.25px;height:12px;line-height:12px;font-family:'Liberation Sans', sans-serif;font-size:7px;font-weight:400;color:#5a8bbf;letter-spacing:0px;white-space:nowrap;text-decoration:underline;text-decoration-color:#a3c0de;text-decoration-thickness:0.7px;text-underline-offset:0.6px;transform:scaleX(1.0858);transform-origin:0 0;"><b style="color:#2e5f92">WZ</b>/2025/03/000034</div><div style="position:absolute;left:475.00px;top:204.40px;height:12px;line-height:12px;font-family:'Liberation Sans', sans-serif;font-size:6.3px;font-weight:400;color:#3a3a3a;letter-spacing:0px;white-space:nowrap;;">a21</div><div style="position:absolute;left:579.77px;top:204.43px;height:12px;line-height:12px;font-family:'Liberation Sans', sans-serif;font-size:6.5px;font-weight:400;color:#4a4a4a;letter-spacing:0px;white-space:nowrap;;">1</div><div style="position:absolute;left:627.88px;top:204.43px;height:12px;line-height:12px;font-family:'Liberation Sans', sans-serif;font-size:6.5px;font-weight:400;color:#4a4a4a;letter-spacing:0px;white-space:nowrap;;">4</div><div style="position:absolute;left:679.40px;top:204.43px;height:12px;line-height:12px;font-family:'Liberation Sans', sans-serif;font-size:6.5px;font-weight:400;color:#4a4a4a;letter-spacing:0px;white-space:nowrap;;">48 <span style="color:#939393;font-size:6.4px">kg</span></div><div style="position:absolute;left:742.70px;top:204.43px;height:12px;line-height:12px;font-family:'Liberation Sans', sans-serif;font-size:6.5px;font-weight:400;color:#4a4a4a;letter-spacing:0px;white-space:nowrap;;">68 <span style="color:#939393;font-size:6.4px">kg</span></div><div style="position:absolute;left:769.00px;top:199.06px;height:12px;line-height:12px;font-family:'Liberation Sans', sans-serif;font-size:6.4px;font-weight:400;color:#3f3f3f;letter-spacing:0px;white-space:nowrap;;">BREE12356</div><div style="position:absolute;left:769.00px;top:208.93px;height:12px;line-height:12px;font-family:'Liberation Sans', sans-serif;font-size:6.5px;font-weight:400;color:#8a8a8a;letter-spacing:0px;white-space:nowrap;;">Bree Trading Company</div><div style="position:absolute;left:856.40px;top:198.92px;height:12px;line-height:12px;font-family:'Liberation Sans', sans-serif;font-size:6.8px;font-weight:400;color:#3a3a3a;letter-spacing:0px;white-space:nowrap;;">Ulica Hobbitów 3</div><div style="position:absolute;left:856.40px;top:208.82px;height:12px;line-height:12px;font-family:'Liberation Sans', sans-serif;font-size:6.8px;font-weight:400;color:#3a3a3a;letter-spacing:0px;white-space:nowrap;;">55-012 Bree</div><svg style="position:absolute;left:995px;top:204.58px" width="4.4" height="10" viewBox="0 0 4.4 10"><circle cx="2.1" cy="2.1" r=".95" fill="#333"/><circle cx="2.1" cy="5.15" r=".95" fill="#333"/><circle cx="2.1" cy="8.2" r=".95" fill="#333"/></svg><div style="position:absolute;left:38.00px;top:221.40px;width:970.00px;height:1.00px;background:#ededed;"></div><div style="position:absolute;left:43.90px;top:228.65px;width:8.80px;height:8.60px;background:transparent;border:1.3px solid #7a7a7a;box-sizing:border-box;border-radius:1px"></div><div style="position:absolute;left:65.60px;top:227.32px;height:12px;line-height:12px;font-family:'Liberation Sans', sans-serif;font-size:7px;font-weight:400;color:#3a3a3a;letter-spacing:0px;white-space:nowrap;;transform:scaleX(0.8819);transform-origin:0 0;">DPOK</div><div style="position:absolute;left:125.10px;top:227.15px;width:11.90px;height:11.30px;background:#f6f6f6;"></div><div style="position:absolute;left:125.10px;top:238.25px;width:11.90px;height:1.90px;background:#cbcbcb;"></div><div style="position:absolute;left:128.00px;top:230.15px;width:7.00px;height:1.00px;background:#d4d4d4;"></div><div style="position:absolute;left:128.00px;top:232.85px;width:7.00px;height:1.00px;background:#d4d4d4;"></div><div style="position:absolute;left:174.03px;top:227.57px;height:12px;line-height:12px;font-family:'Liberation Sans', sans-serif;font-size:6.3px;font-weight:400;color:#3a3a3a;letter-spacing:0px;white-space:nowrap;;">MOP</div><div style="position:absolute;left:224.80px;top:225.15px;height:12px;line-height:12px;font-family:'Liberation Sans', sans-serif;font-size:6.65px;font-weight:400;color:#3a3a3a;letter-spacing:0px;white-space:nowrap;;">Do kompletacji</div><div style="position:absolute;left:281.77px;top:225.02px;height:12px;line-height:12px;font-family:'Liberation Sans', sans-serif;font-size:7px;font-weight:700;color:#2e2e2e;letter-spacing:0px;white-space:nowrap;;">0%</div><div style="position:absolute;left:224.80px;top:236.45px;width:67.10px;height:4.00px;background:#b9d3ec;border-radius:1px"></div><div style="position:absolute;left:302.70px;top:227.32px;height:12px;line-height:12px;font-family:'Liberation Sans', sans-serif;font-size:7px;font-weight:400;color:#5a8bbf;letter-spacing:0px;white-space:nowrap;text-decoration:underline;text-decoration-color:#a3c0de;text-decoration-thickness:0.7px;text-underline-offset:0.6px;transform:scaleX(1.0745);transform-origin:0 0;"><b style="color:#2e5f92">PL</b>/2025/06/000007</div><div style="position:absolute;left:389.10px;top:227.32px;height:12px;line-height:12px;font-family:'Liberation Sans', sans-serif;font-size:7px;font-weight:400;color:#5a8bbf;letter-spacing:0px;white-space:nowrap;text-decoration:underline;text-decoration-color:#a3c0de;text-decoration-thickness:0.7px;text-underline-offset:0.6px;transform:scaleX(1.0858);transform-origin:0 0;"><b style="color:#2e5f92">WZ</b>/2025/03/000046</div><div style="position:absolute;left:475.00px;top:227.47px;height:12px;line-height:12px;font-family:'Liberation Sans', sans-serif;font-size:6.3px;font-weight:400;color:#3a3a3a;letter-spacing:0px;white-space:nowrap;;">a33</div><div style="position:absolute;left:579.77px;top:227.50px;height:12px;line-height:12px;font-family:'Liberation Sans', sans-serif;font-size:6.5px;font-weight:400;color:#4a4a4a;letter-spacing:0px;white-space:nowrap;;">1</div><div style="position:absolute;left:627.88px;top:227.50px;height:12px;line-height:12px;font-family:'Liberation Sans', sans-serif;font-size:6.5px;font-weight:400;color:#4a4a4a;letter-spacing:0px;white-space:nowrap;;">8</div><div style="position:absolute;left:683.03px;top:227.50px;height:12px;line-height:12px;font-family:'Liberation Sans', sans-serif;font-size:6.5px;font-weight:400;color:#4a4a4a;letter-spacing:0px;white-space:nowrap;;">8 <span style="color:#939393;font-size:6.4px">kg</span></div><div style="position:absolute;left:742.70px;top:227.50px;height:12px;line-height:12px;font-family:'Liberation Sans', sans-serif;font-size:6.5px;font-weight:400;color:#4a4a4a;letter-spacing:0px;white-space:nowrap;;">24 <span style="color:#939393;font-size:6.4px">kg</span></div><div style="position:absolute;left:769.00px;top:222.13px;height:12px;line-height:12px;font-family:'Liberation Sans', sans-serif;font-size:6.4px;font-weight:400;color:#3f3f3f;letter-spacing:0px;white-space:nowrap;;">ROHAN12353</div><div style="position:absolute;left:769.00px;top:232.00px;height:12px;line-height:12px;font-family:'Liberation Sans', sans-serif;font-size:6.5px;font-weight:400;color:#8a8a8a;letter-spacing:0px;white-space:nowrap;;">Rohan Traders</div><div style="position:absolute;left:856.40px;top:221.99px;height:12px;line-height:12px;font-family:'Liberation Sans', sans-serif;font-size:6.8px;font-weight:400;color:#3a3a3a;letter-spacing:0px;white-space:nowrap;;">Droga Wojowników 8</div><div style="position:absolute;left:856.40px;top:231.89px;height:12px;line-height:12px;font-family:'Liberation Sans', sans-serif;font-size:6.8px;font-weight:400;color:#3a3a3a;letter-spacing:0px;white-space:nowrap;;">25-009 Edoras</div><svg style="position:absolute;left:995px;top:227.65px" width="4.4" height="10" viewBox="0 0 4.4 10"><circle cx="2.1" cy="2.1" r=".95" fill="#333"/><circle cx="2.1" cy="5.15" r=".95" fill="#333"/><circle cx="2.1" cy="8.2" r=".95" fill="#333"/></svg><div style="position:absolute;left:38.00px;top:244.47px;width:970.00px;height:1.00px;background:#ededed;"></div><div style="position:absolute;left:43.90px;top:251.72px;width:8.80px;height:8.60px;background:transparent;border:1.3px solid #7a7a7a;box-sizing:border-box;border-radius:1px"></div><div style="position:absolute;left:65.60px;top:250.39px;height:12px;line-height:12px;font-family:'Liberation Sans', sans-serif;font-size:7px;font-weight:400;color:#3a3a3a;letter-spacing:0px;white-space:nowrap;;transform:scaleX(0.8819);transform-origin:0 0;">DPOK</div><div style="position:absolute;left:125.10px;top:250.22px;width:11.90px;height:11.30px;background:#f6f6f6;"></div><div style="position:absolute;left:125.10px;top:261.32px;width:11.90px;height:1.90px;background:#cbcbcb;"></div><div style="position:absolute;left:128.00px;top:253.22px;width:7.00px;height:1.00px;background:#d4d4d4;"></div><div style="position:absolute;left:128.00px;top:255.92px;width:7.00px;height:1.00px;background:#d4d4d4;"></div><div style="position:absolute;left:174.03px;top:250.64px;height:12px;line-height:12px;font-family:'Liberation Sans', sans-serif;font-size:6.3px;font-weight:400;color:#3a3a3a;letter-spacing:0px;white-space:nowrap;;">MOP</div><div style="position:absolute;left:224.80px;top:248.22px;height:12px;line-height:12px;font-family:'Liberation Sans', sans-serif;font-size:6.65px;font-weight:400;color:#3a3a3a;letter-spacing:0px;white-space:nowrap;;">W pakowaniu</div><div style="position:absolute;left:277.88px;top:248.09px;height:12px;line-height:12px;font-family:'Liberation Sans', sans-serif;font-size:7px;font-weight:700;color:#2e2e2e;letter-spacing:0px;white-space:nowrap;;">60%</div><div style="position:absolute;left:224.80px;top:259.52px;width:67.10px;height:4.00px;background:#b9d3ec;border-radius:1px"></div><div style="position:absolute;left:224.80px;top:259.52px;width:40.26px;height:4.00px;background:#1b63ad;border-radius:1px"></div><div style="position:absolute;left:302.70px;top:250.39px;height:12px;line-height:12px;font-family:'Liberation Sans', sans-serif;font-size:7px;font-weight:400;color:#5a8bbf;letter-spacing:0px;white-space:nowrap;text-decoration:underline;text-decoration-color:#a3c0de;text-decoration-thickness:0.7px;text-underline-offset:0.6px;transform:scaleX(1.0745);transform-origin:0 0;"><b style="color:#2e5f92">PL</b>/2025/05/000027</div><div style="position:absolute;left:389.10px;top:250.39px;height:12px;line-height:12px;font-family:'Liberation Sans', sans-serif;font-size:7px;font-weight:400;color:#5a8bbf;letter-spacing:0px;white-space:nowrap;text-decoration:underline;text-decoration-color:#a3c0de;text-decoration-thickness:0.7px;text-underline-offset:0.6px;transform:scaleX(1.0858);transform-origin:0 0;"><b style="color:#2e5f92">WZ</b>/2025/03/000065</div><div style="position:absolute;left:475.00px;top:250.54px;height:12px;line-height:12px;font-family:'Liberation Sans', sans-serif;font-size:6.3px;font-weight:400;color:#3a3a3a;letter-spacing:0px;white-space:nowrap;;">a52</div><div style="position:absolute;left:579.77px;top:250.57px;height:12px;line-height:12px;font-family:'Liberation Sans', sans-serif;font-size:6.5px;font-weight:400;color:#4a4a4a;letter-spacing:0px;white-space:nowrap;;">1</div><div style="position:absolute;left:627.88px;top:250.57px;height:12px;line-height:12px;font-family:'Liberation Sans', sans-serif;font-size:6.5px;font-weight:400;color:#4a4a4a;letter-spacing:0px;white-space:nowrap;;">5</div><div style="position:absolute;left:675.79px;top:250.57px;height:12px;line-height:12px;font-family:'Liberation Sans', sans-serif;font-size:6.5px;font-weight:400;color:#4a4a4a;letter-spacing:0px;white-space:nowrap;;">160 <span style="color:#939393;font-size:6.4px">kg</span></div><div style="position:absolute;left:739.09px;top:250.57px;height:12px;line-height:12px;font-family:'Liberation Sans', sans-serif;font-size:6.5px;font-weight:400;color:#4a4a4a;letter-spacing:0px;white-space:nowrap;;">170 <span style="color:#939393;font-size:6.4px">kg</span></div><div style="position:absolute;left:769.00px;top:245.20px;height:12px;line-height:12px;font-family:'Liberation Sans', sans-serif;font-size:6.4px;font-weight:400;color:#3f3f3f;letter-spacing:0px;white-space:nowrap;;">GONDOR12357</div><div style="position:absolute;left:769.00px;top:255.07px;height:12px;line-height:12px;font-family:'Liberation Sans', sans-serif;font-size:6.5px;font-weight:400;color:#8a8a8a;letter-spacing:0px;white-space:nowrap;;">Gondor Technologies</div><div style="position:absolute;left:856.40px;top:245.06px;height:12px;line-height:12px;font-family:'Liberation Sans', sans-serif;font-size:6.8px;font-weight:400;color:#3a3a3a;letter-spacing:0px;white-space:nowrap;;">Dolina Królew 10/2</div><div style="position:absolute;left:856.40px;top:254.96px;height:12px;line-height:12px;font-family:'Liberation Sans', sans-serif;font-size:6.8px;font-weight:400;color:#3a3a3a;letter-spacing:0px;white-space:nowrap;;">45-013 Minas Tirith</div><svg style="position:absolute;left:995px;top:250.72px" width="4.4" height="10" viewBox="0 0 4.4 10"><circle cx="2.1" cy="2.1" r=".95" fill="#333"/><circle cx="2.1" cy="5.15" r=".95" fill="#333"/><circle cx="2.1" cy="8.2" r=".95" fill="#333"/></svg><div style="position:absolute;left:38.00px;top:267.54px;width:970.00px;height:1.00px;background:#ededed;"></div><div style="position:absolute;left:43.90px;top:274.79px;width:8.80px;height:8.60px;background:transparent;border:1.3px solid #7a7a7a;box-sizing:border-box;border-radius:1px"></div><div style="position:absolute;left:65.60px;top:273.46px;height:12px;line-height:12px;font-family:'Liberation Sans', sans-serif;font-size:7px;font-weight:400;color:#3a3a3a;letter-spacing:0px;white-space:nowrap;;transform:scaleX(0.8819);transform-origin:0 0;">DPOK</div><div style="position:absolute;left:125.10px;top:273.29px;width:11.90px;height:11.30px;background:#a9e3d6;"></div><div style="position:absolute;left:125.10px;top:284.39px;width:11.90px;height:1.90px;background:#3e9e88;"></div><svg style="position:absolute;left:127px;top:274.79px" width="8" height="8" viewBox="0 0 8 8"><path d="M1.6 2.6L4 4.9l2.4-2.3" fill="none" stroke="#3e8f7e" stroke-width="1.2"/></svg><div style="position:absolute;left:174.54px;top:273.71px;height:12px;line-height:12px;font-family:'Liberation Sans', sans-serif;font-size:6.3px;font-weight:400;color:#3a3a3a;letter-spacing:0px;white-space:nowrap;;">BOP</div><div style="position:absolute;left:224.80px;top:271.29px;height:12px;line-height:12px;font-family:'Liberation Sans', sans-serif;font-size:6.65px;font-weight:400;color:#3a3a3a;letter-spacing:0px;white-space:nowrap;;">Do kompletacji</div><div style="position:absolute;left:281.77px;top:271.16px;height:12px;line-height:12px;font-family:'Liberation Sans', sans-serif;font-size:7px;font-weight:700;color:#2e2e2e;letter-spacing:0px;white-space:nowrap;;">0%</div><div style="position:absolute;left:224.80px;top:282.59px;width:67.10px;height:4.00px;background:#b9d3ec;border-radius:1px"></div><div style="position:absolute;left:302.70px;top:273.46px;height:12px;line-height:12px;font-family:'Liberation Sans', sans-serif;font-size:7px;font-weight:400;color:#5a8bbf;letter-spacing:0px;white-space:nowrap;text-decoration:underline;text-decoration-color:#a3c0de;text-decoration-thickness:0.7px;text-underline-offset:0.6px;transform:scaleX(1.0745);transform-origin:0 0;"><b style="color:#2e5f92">PL</b>/2025/06/000009</div><div style="position:absolute;left:389.10px;top:273.46px;height:12px;line-height:12px;font-family:'Liberation Sans', sans-serif;font-size:7px;font-weight:400;color:#5a8bbf;letter-spacing:0px;white-space:nowrap;text-decoration:underline;text-decoration-color:#a3c0de;text-decoration-thickness:0.7px;text-underline-offset:0.6px;transform:scaleX(1.0858);transform-origin:0 0;"><b style="color:#2e5f92">WZ</b>/2025/02/000277</div><div style="position:absolute;left:475.00px;top:273.61px;height:12px;line-height:12px;font-family:'Liberation Sans', sans-serif;font-size:6.3px;font-weight:400;color:#3a3a3a;letter-spacing:0px;white-space:nowrap;;">267</div><div style="position:absolute;left:579.77px;top:273.64px;height:12px;line-height:12px;font-family:'Liberation Sans', sans-serif;font-size:6.5px;font-weight:400;color:#4a4a4a;letter-spacing:0px;white-space:nowrap;;">1</div><div style="position:absolute;left:627.88px;top:273.64px;height:12px;line-height:12px;font-family:'Liberation Sans', sans-serif;font-size:6.5px;font-weight:400;color:#4a4a4a;letter-spacing:0px;white-space:nowrap;;">5</div><div style="position:absolute;left:675.79px;top:273.64px;height:12px;line-height:12px;font-family:'Liberation Sans', sans-serif;font-size:6.5px;font-weight:400;color:#4a4a4a;letter-spacing:0px;white-space:nowrap;;">105 <span style="color:#939393;font-size:6.4px">kg</span></div><div style="position:absolute;left:739.09px;top:273.64px;height:12px;line-height:12px;font-family:'Liberation Sans', sans-serif;font-size:6.5px;font-weight:400;color:#4a4a4a;letter-spacing:0px;white-space:nowrap;;">120 <span style="color:#939393;font-size:6.4px">kg</span></div><div style="position:absolute;left:769.00px;top:268.27px;height:12px;line-height:12px;font-family:'Liberation Sans', sans-serif;font-size:6.4px;font-weight:400;color:#3f3f3f;letter-spacing:0px;white-space:nowrap;;">KONTR12345</div><div style="position:absolute;left:769.00px;top:278.14px;height:12px;line-height:12px;font-family:'Liberation Sans', sans-serif;font-size:6.5px;font-weight:400;color:#8a8a8a;letter-spacing:0px;white-space:nowrap;;">Gondor Industries</div><div style="position:absolute;left:856.40px;top:268.13px;height:12px;line-height:12px;font-family:'Liberation Sans', sans-serif;font-size:6.8px;font-weight:400;color:#3a3a3a;letter-spacing:0px;white-space:nowrap;;">Królewska 15/2</div><div style="position:absolute;left:856.40px;top:278.03px;height:12px;line-height:12px;font-family:'Liberation Sans', sans-serif;font-size:6.8px;font-weight:400;color:#3a3a3a;letter-spacing:0px;white-space:nowrap;;">00-001 Minas Tirith</div><svg style="position:absolute;left:995px;top:273.79px" width="4.4" height="10" viewBox="0 0 4.4 10"><circle cx="2.1" cy="2.1" r=".95" fill="#333"/><circle cx="2.1" cy="5.15" r=".95" fill="#333"/><circle cx="2.1" cy="8.2" r=".95" fill="#333"/></svg><div style="position:absolute;left:38.00px;top:290.61px;width:970.00px;height:1.00px;background:#ededed;"></div><div style="position:absolute;left:43.90px;top:297.86px;width:8.80px;height:8.60px;background:transparent;border:1.3px solid #7a7a7a;box-sizing:border-box;border-radius:1px"></div><div style="position:absolute;left:65.60px;top:296.53px;height:12px;line-height:12px;font-family:'Liberation Sans', sans-serif;font-size:7px;font-weight:400;color:#3a3a3a;letter-spacing:0px;white-space:nowrap;;transform:scaleX(0.8819);transform-origin:0 0;">DPOK</div><div style="position:absolute;left:125.10px;top:296.36px;width:11.90px;height:11.30px;background:#a9e3d6;"></div><div style="position:absolute;left:125.10px;top:307.46px;width:11.90px;height:1.90px;background:#3e9e88;"></div><svg style="position:absolute;left:127px;top:297.86px" width="8" height="8" viewBox="0 0 8 8"><path d="M1.6 2.6L4 4.9l2.4-2.3" fill="none" stroke="#3e8f7e" stroke-width="1.2"/></svg><div style="position:absolute;left:174.54px;top:296.78px;height:12px;line-height:12px;font-family:'Liberation Sans', sans-serif;font-size:6.3px;font-weight:400;color:#3a3a3a;letter-spacing:0px;white-space:nowrap;;">BOP</div><div style="position:absolute;left:224.80px;top:294.36px;height:12px;line-height:12px;font-family:'Liberation Sans', sans-serif;font-size:6.65px;font-weight:400;color:#3a3a3a;letter-spacing:0px;white-space:nowrap;;">Do kompletacji</div><div style="position:absolute;left:281.77px;top:294.23px;height:12px;line-height:12px;font-family:'Liberation Sans', sans-serif;font-size:7px;font-weight:700;color:#2e2e2e;letter-spacing:0px;white-space:nowrap;;">0%</div><div style="position:absolute;left:224.80px;top:305.66px;width:67.10px;height:4.00px;background:#b9d3ec;border-radius:1px"></div><div style="position:absolute;left:302.70px;top:296.53px;height:12px;line-height:12px;font-family:'Liberation Sans', sans-serif;font-size:7px;font-weight:400;color:#5a8bbf;letter-spacing:0px;white-space:nowrap;text-decoration:underline;text-decoration-color:#a3c0de;text-decoration-thickness:0.7px;text-underline-offset:0.6px;transform:scaleX(1.0745);transform-origin:0 0;"><b style="color:#2e5f92">PL</b>/2025/06/000009</div><div style="position:absolute;left:389.10px;top:296.53px;height:12px;line-height:12px;font-family:'Liberation Sans', sans-serif;font-size:7px;font-weight:400;color:#5a8bbf;letter-spacing:0px;white-space:nowrap;text-decoration:underline;text-decoration-color:#a3c0de;text-decoration-thickness:0.7px;text-underline-offset:0.6px;transform:scaleX(1.0858);transform-origin:0 0;"><b style="color:#2e5f92">WZ</b>/2025/02/000278</div><div style="position:absolute;left:475.00px;top:296.68px;height:12px;line-height:12px;font-family:'Liberation Sans', sans-serif;font-size:6.3px;font-weight:400;color:#3a3a3a;letter-spacing:0px;white-space:nowrap;;">268</div><div style="position:absolute;left:579.77px;top:296.71px;height:12px;line-height:12px;font-family:'Liberation Sans', sans-serif;font-size:6.5px;font-weight:400;color:#4a4a4a;letter-spacing:0px;white-space:nowrap;;">1</div><div style="position:absolute;left:627.88px;top:296.71px;height:12px;line-height:12px;font-family:'Liberation Sans', sans-serif;font-size:6.5px;font-weight:400;color:#4a4a4a;letter-spacing:0px;white-space:nowrap;;">8</div><div style="position:absolute;left:679.40px;top:296.71px;height:12px;line-height:12px;font-family:'Liberation Sans', sans-serif;font-size:6.5px;font-weight:400;color:#4a4a4a;letter-spacing:0px;white-space:nowrap;;">40 <span style="color:#939393;font-size:6.4px">kg</span></div><div style="position:absolute;left:742.70px;top:296.71px;height:12px;line-height:12px;font-family:'Liberation Sans', sans-serif;font-size:6.5px;font-weight:400;color:#4a4a4a;letter-spacing:0px;white-space:nowrap;;">56 <span style="color:#939393;font-size:6.4px">kg</span></div><div style="position:absolute;left:769.00px;top:291.34px;height:12px;line-height:12px;font-family:'Liberation Sans', sans-serif;font-size:6.4px;font-weight:400;color:#3f3f3f;letter-spacing:0px;white-space:nowrap;;">KONTR12346</div><div style="position:absolute;left:769.00px;top:301.21px;height:12px;line-height:12px;font-family:'Liberation Sans', sans-serif;font-size:6.5px;font-weight:400;color:#8a8a8a;letter-spacing:0px;white-space:nowrap;;">Gondor Industries</div><div style="position:absolute;left:856.40px;top:291.20px;height:12px;line-height:12px;font-family:'Liberation Sans', sans-serif;font-size:6.8px;font-weight:400;color:#3a3a3a;letter-spacing:0px;white-space:nowrap;;">Królewska 15/2</div><div style="position:absolute;left:856.40px;top:301.10px;height:12px;line-height:12px;font-family:'Liberation Sans', sans-serif;font-size:6.8px;font-weight:400;color:#3a3a3a;letter-spacing:0px;white-space:nowrap;;">00-002 Minas Tirith</div><svg style="position:absolute;left:995px;top:296.86px" width="4.4" height="10" viewBox="0 0 4.4 10"><circle cx="2.1" cy="2.1" r=".95" fill="#333"/><circle cx="2.1" cy="5.15" r=".95" fill="#333"/><circle cx="2.1" cy="8.2" r=".95" fill="#333"/></svg><div style="position:absolute;left:38.00px;top:313.68px;width:970.00px;height:1.00px;background:#ededed;"></div><div style="position:absolute;left:43.90px;top:320.93px;width:8.80px;height:8.60px;background:transparent;border:1.3px solid #7a7a7a;box-sizing:border-box;border-radius:1px"></div><div style="position:absolute;left:65.60px;top:319.60px;height:12px;line-height:12px;font-family:'Liberation Sans', sans-serif;font-size:7px;font-weight:400;color:#3a3a3a;letter-spacing:0px;white-space:nowrap;;transform:scaleX(0.8819);transform-origin:0 0;">DPOK</div><div style="position:absolute;left:125.10px;top:319.43px;width:11.90px;height:11.30px;background:#a9e3d6;"></div><div style="position:absolute;left:125.10px;top:330.53px;width:11.90px;height:1.90px;background:#3e9e88;"></div><svg style="position:absolute;left:127px;top:320.93px" width="8" height="8" viewBox="0 0 8 8"><path d="M1.6 2.6L4 4.9l2.4-2.3" fill="none" stroke="#3e8f7e" stroke-width="1.2"/></svg><div style="position:absolute;left:174.54px;top:319.85px;height:12px;line-height:12px;font-family:'Liberation Sans', sans-serif;font-size:6.3px;font-weight:400;color:#3a3a3a;letter-spacing:0px;white-space:nowrap;;">BOP</div><div style="position:absolute;left:224.80px;top:317.43px;height:12px;line-height:12px;font-family:'Liberation Sans', sans-serif;font-size:6.65px;font-weight:400;color:#3a3a3a;letter-spacing:0px;white-space:nowrap;;">Do kompletacji</div><div style="position:absolute;left:281.77px;top:317.30px;height:12px;line-height:12px;font-family:'Liberation Sans', sans-serif;font-size:7px;font-weight:700;color:#2e2e2e;letter-spacing:0px;white-space:nowrap;;">0%</div><div style="position:absolute;left:224.80px;top:328.73px;width:67.10px;height:4.00px;background:#b9d3ec;border-radius:1px"></div><div style="position:absolute;left:302.70px;top:319.60px;height:12px;line-height:12px;font-family:'Liberation Sans', sans-serif;font-size:7px;font-weight:400;color:#5a8bbf;letter-spacing:0px;white-space:nowrap;text-decoration:underline;text-decoration-color:#a3c0de;text-decoration-thickness:0.7px;text-underline-offset:0.6px;transform:scaleX(1.0745);transform-origin:0 0;"><b style="color:#2e5f92">PL</b>/2025/06/000009</div><div style="position:absolute;left:389.10px;top:319.60px;height:12px;line-height:12px;font-family:'Liberation Sans', sans-serif;font-size:7px;font-weight:400;color:#5a8bbf;letter-spacing:0px;white-space:nowrap;text-decoration:underline;text-decoration-color:#a3c0de;text-decoration-thickness:0.7px;text-underline-offset:0.6px;transform:scaleX(1.0858);transform-origin:0 0;"><b style="color:#2e5f92">WZ</b>/2025/02/000279</div><div style="position:absolute;left:475.00px;top:319.75px;height:12px;line-height:12px;font-family:'Liberation Sans', sans-serif;font-size:6.3px;font-weight:400;color:#3a3a3a;letter-spacing:0px;white-space:nowrap;;">269</div><div style="position:absolute;left:579.77px;top:319.78px;height:12px;line-height:12px;font-family:'Liberation Sans', sans-serif;font-size:6.5px;font-weight:400;color:#4a4a4a;letter-spacing:0px;white-space:nowrap;;">1</div><div style="position:absolute;left:627.88px;top:319.78px;height:12px;line-height:12px;font-family:'Liberation Sans', sans-serif;font-size:6.5px;font-weight:400;color:#4a4a4a;letter-spacing:0px;white-space:nowrap;;">6</div><div style="position:absolute;left:679.40px;top:319.78px;height:12px;line-height:12px;font-family:'Liberation Sans', sans-serif;font-size:6.5px;font-weight:400;color:#4a4a4a;letter-spacing:0px;white-space:nowrap;;">72 <span style="color:#939393;font-size:6.4px">kg</span></div><div style="position:absolute;left:742.70px;top:319.78px;height:12px;line-height:12px;font-family:'Liberation Sans', sans-serif;font-size:6.5px;font-weight:400;color:#4a4a4a;letter-spacing:0px;white-space:nowrap;;">78 <span style="color:#939393;font-size:6.4px">kg</span></div><div style="position:absolute;left:769.00px;top:314.41px;height:12px;line-height:12px;font-family:'Liberation Sans', sans-serif;font-size:6.4px;font-weight:400;color:#3f3f3f;letter-spacing:0px;white-space:nowrap;;">KONTR12347</div><div style="position:absolute;left:769.00px;top:324.28px;height:12px;line-height:12px;font-family:'Liberation Sans', sans-serif;font-size:6.5px;font-weight:400;color:#8a8a8a;letter-spacing:0px;white-space:nowrap;;">Gondor Industries</div><div style="position:absolute;left:856.40px;top:314.27px;height:12px;line-height:12px;font-family:'Liberation Sans', sans-serif;font-size:6.8px;font-weight:400;color:#3a3a3a;letter-spacing:0px;white-space:nowrap;;">Królewska 15/2</div><div style="position:absolute;left:856.40px;top:324.17px;height:12px;line-height:12px;font-family:'Liberation Sans', sans-serif;font-size:6.8px;font-weight:400;color:#3a3a3a;letter-spacing:0px;white-space:nowrap;;">00-003 Minas Tirith</div><svg style="position:absolute;left:995px;top:319.93px" width="4.4" height="10" viewBox="0 0 4.4 10"><circle cx="2.1" cy="2.1" r=".95" fill="#333"/><circle cx="2.1" cy="5.15" r=".95" fill="#333"/><circle cx="2.1" cy="8.2" r=".95" fill="#333"/></svg><div style="position:absolute;left:38.00px;top:336.75px;width:970.00px;height:1.00px;background:#ededed;"></div><div style="position:absolute;left:43.90px;top:344.00px;width:8.80px;height:8.60px;background:transparent;border:1.3px solid #7a7a7a;box-sizing:border-box;border-radius:1px"></div><div style="position:absolute;left:65.60px;top:342.67px;height:12px;line-height:12px;font-family:'Liberation Sans', sans-serif;font-size:7px;font-weight:400;color:#3a3a3a;letter-spacing:0px;white-space:nowrap;;transform:scaleX(0.8819);transform-origin:0 0;">DPOK</div><div style="position:absolute;left:125.10px;top:342.50px;width:11.90px;height:11.30px;background:#a9e3d6;"></div><div style="position:absolute;left:125.10px;top:353.60px;width:11.90px;height:1.90px;background:#3e9e88;"></div><svg style="position:absolute;left:127px;top:344.00px" width="8" height="8" viewBox="0 0 8 8"><path d="M1.6 2.6L4 4.9l2.4-2.3" fill="none" stroke="#3e8f7e" stroke-width="1.2"/></svg><div style="position:absolute;left:174.54px;top:342.92px;height:12px;line-height:12px;font-family:'Liberation Sans', sans-serif;font-size:6.3px;font-weight:400;color:#3a3a3a;letter-spacing:0px;white-space:nowrap;;">BOP</div><div style="position:absolute;left:224.80px;top:340.50px;height:12px;line-height:12px;font-family:'Liberation Sans', sans-serif;font-size:6.65px;font-weight:400;color:#3a3a3a;letter-spacing:0px;white-space:nowrap;;">Do kompletacji</div><div style="position:absolute;left:281.77px;top:340.37px;height:12px;line-height:12px;font-family:'Liberation Sans', sans-serif;font-size:7px;font-weight:700;color:#2e2e2e;letter-spacing:0px;white-space:nowrap;;">0%</div><div style="position:absolute;left:224.80px;top:351.80px;width:67.10px;height:4.00px;background:#b9d3ec;border-radius:1px"></div><div style="position:absolute;left:302.70px;top:342.67px;height:12px;line-height:12px;font-family:'Liberation Sans', sans-serif;font-size:7px;font-weight:400;color:#5a8bbf;letter-spacing:0px;white-space:nowrap;text-decoration:underline;text-decoration-color:#a3c0de;text-decoration-thickness:0.7px;text-underline-offset:0.6px;transform:scaleX(1.0745);transform-origin:0 0;"><b style="color:#2e5f92">PL</b>/2025/06/000009</div><div style="position:absolute;left:389.10px;top:342.67px;height:12px;line-height:12px;font-family:'Liberation Sans', sans-serif;font-size:7px;font-weight:400;color:#5a8bbf;letter-spacing:0px;white-space:nowrap;text-decoration:underline;text-decoration-color:#a3c0de;text-decoration-thickness:0.7px;text-underline-offset:0.6px;transform:scaleX(1.0858);transform-origin:0 0;"><b style="color:#2e5f92">WZ</b>/2025/02/000281</div><div style="position:absolute;left:475.00px;top:342.82px;height:12px;line-height:12px;font-family:'Liberation Sans', sans-serif;font-size:6.3px;font-weight:400;color:#3a3a3a;letter-spacing:0px;white-space:nowrap;;">271</div><div style="position:absolute;left:579.77px;top:342.85px;height:12px;line-height:12px;font-family:'Liberation Sans', sans-serif;font-size:6.5px;font-weight:400;color:#4a4a4a;letter-spacing:0px;white-space:nowrap;;">1</div><div style="position:absolute;left:627.88px;top:342.85px;height:12px;line-height:12px;font-family:'Liberation Sans', sans-serif;font-size:6.5px;font-weight:400;color:#4a4a4a;letter-spacing:0px;white-space:nowrap;;">4</div><div style="position:absolute;left:679.40px;top:342.85px;height:12px;line-height:12px;font-family:'Liberation Sans', sans-serif;font-size:6.5px;font-weight:400;color:#4a4a4a;letter-spacing:0px;white-space:nowrap;;">48 <span style="color:#939393;font-size:6.4px">kg</span></div><div style="position:absolute;left:742.70px;top:342.85px;height:12px;line-height:12px;font-family:'Liberation Sans', sans-serif;font-size:6.5px;font-weight:400;color:#4a4a4a;letter-spacing:0px;white-space:nowrap;;">68 <span style="color:#939393;font-size:6.4px">kg</span></div><div style="position:absolute;left:769.00px;top:337.48px;height:12px;line-height:12px;font-family:'Liberation Sans', sans-serif;font-size:6.4px;font-weight:400;color:#3f3f3f;letter-spacing:0px;white-space:nowrap;;">KONTR12349</div><div style="position:absolute;left:769.00px;top:347.35px;height:12px;line-height:12px;font-family:'Liberation Sans', sans-serif;font-size:6.5px;font-weight:400;color:#8a8a8a;letter-spacing:0px;white-space:nowrap;;">Gondor Industries</div><div style="position:absolute;left:856.40px;top:337.34px;height:12px;line-height:12px;font-family:'Liberation Sans', sans-serif;font-size:6.8px;font-weight:400;color:#3a3a3a;letter-spacing:0px;white-space:nowrap;;">Królewska 15/2</div><div style="position:absolute;left:856.40px;top:347.24px;height:12px;line-height:12px;font-family:'Liberation Sans', sans-serif;font-size:6.8px;font-weight:400;color:#3a3a3a;letter-spacing:0px;white-space:nowrap;;">00-005 Minas Tirith</div><svg style="position:absolute;left:995px;top:343.00px" width="4.4" height="10" viewBox="0 0 4.4 10"><circle cx="2.1" cy="2.1" r=".95" fill="#333"/><circle cx="2.1" cy="5.15" r=".95" fill="#333"/><circle cx="2.1" cy="8.2" r=".95" fill="#333"/></svg><div style="position:absolute;left:38.00px;top:359.82px;width:970.00px;height:1.00px;background:#ededed;"></div><div style="position:absolute;left:43.90px;top:367.07px;width:8.80px;height:8.60px;background:transparent;border:1.3px solid #7a7a7a;box-sizing:border-box;border-radius:1px"></div><div style="position:absolute;left:65.60px;top:365.74px;height:12px;line-height:12px;font-family:'Liberation Sans', sans-serif;font-size:7px;font-weight:400;color:#3a3a3a;letter-spacing:0px;white-space:nowrap;;transform:scaleX(0.8819);transform-origin:0 0;">DPOK</div><div style="position:absolute;left:125.10px;top:365.57px;width:11.90px;height:11.30px;background:#a9e3d6;"></div><div style="position:absolute;left:125.10px;top:376.67px;width:11.90px;height:1.90px;background:#3e9e88;"></div><svg style="position:absolute;left:127px;top:367.07px" width="8" height="8" viewBox="0 0 8 8"><path d="M1.6 2.6L4 4.9l2.4-2.3" fill="none" stroke="#3e8f7e" stroke-width="1.2"/></svg><div style="position:absolute;left:174.54px;top:365.99px;height:12px;line-height:12px;font-family:'Liberation Sans', sans-serif;font-size:6.3px;font-weight:400;color:#3a3a3a;letter-spacing:0px;white-space:nowrap;;">BOP</div><div style="position:absolute;left:224.80px;top:363.57px;height:12px;line-height:12px;font-family:'Liberation Sans', sans-serif;font-size:6.65px;font-weight:400;color:#3a3a3a;letter-spacing:0px;white-space:nowrap;;">Do kompletacji</div><div style="position:absolute;left:281.77px;top:363.44px;height:12px;line-height:12px;font-family:'Liberation Sans', sans-serif;font-size:7px;font-weight:700;color:#2e2e2e;letter-spacing:0px;white-space:nowrap;;">0%</div><div style="position:absolute;left:224.80px;top:374.87px;width:67.10px;height:4.00px;background:#b9d3ec;border-radius:1px"></div><div style="position:absolute;left:302.70px;top:365.74px;height:12px;line-height:12px;font-family:'Liberation Sans', sans-serif;font-size:7px;font-weight:400;color:#5a8bbf;letter-spacing:0px;white-space:nowrap;text-decoration:underline;text-decoration-color:#a3c0de;text-decoration-thickness:0.7px;text-underline-offset:0.6px;transform:scaleX(1.0745);transform-origin:0 0;"><b style="color:#2e5f92">PL</b>/2025/06/000009</div><div style="position:absolute;left:389.10px;top:365.74px;height:12px;line-height:12px;font-family:'Liberation Sans', sans-serif;font-size:7px;font-weight:400;color:#5a8bbf;letter-spacing:0px;white-space:nowrap;text-decoration:underline;text-decoration-color:#a3c0de;text-decoration-thickness:0.7px;text-underline-offset:0.6px;transform:scaleX(1.0858);transform-origin:0 0;"><b style="color:#2e5f92">WZ</b>/2025/02/000282</div><div style="position:absolute;left:475.00px;top:365.89px;height:12px;line-height:12px;font-family:'Liberation Sans', sans-serif;font-size:6.3px;font-weight:400;color:#3a3a3a;letter-spacing:0px;white-space:nowrap;;">272</div><div style="position:absolute;left:579.77px;top:365.92px;height:12px;line-height:12px;font-family:'Liberation Sans', sans-serif;font-size:6.5px;font-weight:400;color:#4a4a4a;letter-spacing:0px;white-space:nowrap;;">1</div><div style="position:absolute;left:627.88px;top:365.92px;height:12px;line-height:12px;font-family:'Liberation Sans', sans-serif;font-size:6.5px;font-weight:400;color:#4a4a4a;letter-spacing:0px;white-space:nowrap;;">5</div><div style="position:absolute;left:675.79px;top:365.92px;height:12px;line-height:12px;font-family:'Liberation Sans', sans-serif;font-size:6.5px;font-weight:400;color:#4a4a4a;letter-spacing:0px;white-space:nowrap;;">160 <span style="color:#939393;font-size:6.4px">kg</span></div><div style="position:absolute;left:739.09px;top:365.92px;height:12px;line-height:12px;font-family:'Liberation Sans', sans-serif;font-size:6.5px;font-weight:400;color:#4a4a4a;letter-spacing:0px;white-space:nowrap;;">170 <span style="color:#939393;font-size:6.4px">kg</span></div><div style="position:absolute;left:769.00px;top:360.55px;height:12px;line-height:12px;font-family:'Liberation Sans', sans-serif;font-size:6.4px;font-weight:400;color:#3f3f3f;letter-spacing:0px;white-space:nowrap;;">MORD12346</div><div style="position:absolute;left:769.00px;top:370.42px;height:12px;line-height:12px;font-family:'Liberation Sans', sans-serif;font-size:6.5px;font-weight:400;color:#8a8a8a;letter-spacing:0px;white-space:nowrap;;">Mordor Forge</div><div style="position:absolute;left:856.40px;top:360.41px;height:12px;line-height:12px;font-family:'Liberation Sans', sans-serif;font-size:6.8px;font-weight:400;color:#3a3a3a;letter-spacing:0px;white-space:nowrap;;">Ciemna Dolina 21</div><div style="position:absolute;left:856.40px;top:370.31px;height:12px;line-height:12px;font-family:'Liberation Sans', sans-serif;font-size:6.8px;font-weight:400;color:#3a3a3a;letter-spacing:0px;white-space:nowrap;;">11-222 Barad-Dûr</div><svg style="position:absolute;left:995px;top:366.07px" width="4.4" height="10" viewBox="0 0 4.4 10"><circle cx="2.1" cy="2.1" r=".95" fill="#333"/><circle cx="2.1" cy="5.15" r=".95" fill="#333"/><circle cx="2.1" cy="8.2" r=".95" fill="#333"/></svg><div style="position:absolute;left:38.00px;top:382.89px;width:970.00px;height:1.00px;background:#ededed;"></div><div style="position:absolute;left:43.90px;top:390.14px;width:8.80px;height:8.60px;background:transparent;border:1.3px solid #7a7a7a;box-sizing:border-box;border-radius:1px"></div><div style="position:absolute;left:65.60px;top:388.81px;height:12px;line-height:12px;font-family:'Liberation Sans', sans-serif;font-size:7px;font-weight:400;color:#3a3a3a;letter-spacing:0px;white-space:nowrap;;transform:scaleX(0.8819);transform-origin:0 0;">DPOK</div><div style="position:absolute;left:125.10px;top:388.64px;width:11.90px;height:11.30px;background:#a9e3d6;"></div><div style="position:absolute;left:125.10px;top:399.74px;width:11.90px;height:1.90px;background:#3e9e88;"></div><svg style="position:absolute;left:127px;top:390.14px" width="8" height="8" viewBox="0 0 8 8"><path d="M1.6 2.6L4 4.9l2.4-2.3" fill="none" stroke="#3e8f7e" stroke-width="1.2"/></svg><div style="position:absolute;left:174.54px;top:389.06px;height:12px;line-height:12px;font-family:'Liberation Sans', sans-serif;font-size:6.3px;font-weight:400;color:#3a3a3a;letter-spacing:0px;white-space:nowrap;;">BOP</div><div style="position:absolute;left:224.80px;top:386.64px;height:12px;line-height:12px;font-family:'Liberation Sans', sans-serif;font-size:6.65px;font-weight:400;color:#3a3a3a;letter-spacing:0px;white-space:nowrap;;">Do kompletacji</div><div style="position:absolute;left:281.77px;top:386.51px;height:12px;line-height:12px;font-family:'Liberation Sans', sans-serif;font-size:7px;font-weight:700;color:#2e2e2e;letter-spacing:0px;white-space:nowrap;;">0%</div><div style="position:absolute;left:224.80px;top:397.94px;width:67.10px;height:4.00px;background:#b9d3ec;border-radius:1px"></div><div style="position:absolute;left:302.70px;top:388.81px;height:12px;line-height:12px;font-family:'Liberation Sans', sans-serif;font-size:7px;font-weight:400;color:#5a8bbf;letter-spacing:0px;white-space:nowrap;text-decoration:underline;text-decoration-color:#a3c0de;text-decoration-thickness:0.7px;text-underline-offset:0.6px;transform:scaleX(1.0745);transform-origin:0 0;"><b style="color:#2e5f92">PL</b>/2025/06/000009</div><div style="position:absolute;left:389.10px;top:388.81px;height:12px;line-height:12px;font-family:'Liberation Sans', sans-serif;font-size:7px;font-weight:400;color:#5a8bbf;letter-spacing:0px;white-space:nowrap;text-decoration:underline;text-decoration-color:#a3c0de;text-decoration-thickness:0.7px;text-underline-offset:0.6px;transform:scaleX(1.0858);transform-origin:0 0;"><b style="color:#2e5f92">WZ</b>/2025/02/000284</div><div style="position:absolute;left:475.00px;top:388.96px;height:12px;line-height:12px;font-family:'Liberation Sans', sans-serif;font-size:6.3px;font-weight:400;color:#3a3a3a;letter-spacing:0px;white-space:nowrap;;">274</div><div style="position:absolute;left:579.77px;top:388.99px;height:12px;line-height:12px;font-family:'Liberation Sans', sans-serif;font-size:6.5px;font-weight:400;color:#4a4a4a;letter-spacing:0px;white-space:nowrap;;">1</div><div style="position:absolute;left:627.88px;top:388.99px;height:12px;line-height:12px;font-family:'Liberation Sans', sans-serif;font-size:6.5px;font-weight:400;color:#4a4a4a;letter-spacing:0px;white-space:nowrap;;">6</div><div style="position:absolute;left:679.40px;top:388.99px;height:12px;line-height:12px;font-family:'Liberation Sans', sans-serif;font-size:6.5px;font-weight:400;color:#4a4a4a;letter-spacing:0px;white-space:nowrap;;">12 <span style="color:#939393;font-size:6.4px">kg</span></div><div style="position:absolute;left:742.70px;top:388.99px;height:12px;line-height:12px;font-family:'Liberation Sans', sans-serif;font-size:6.5px;font-weight:400;color:#4a4a4a;letter-spacing:0px;white-space:nowrap;;">24 <span style="color:#939393;font-size:6.4px">kg</span></div><div style="position:absolute;left:769.00px;top:383.62px;height:12px;line-height:12px;font-family:'Liberation Sans', sans-serif;font-size:6.4px;font-weight:400;color:#3f3f3f;letter-spacing:0px;white-space:nowrap;;">MORD12348</div><div style="position:absolute;left:769.00px;top:393.49px;height:12px;line-height:12px;font-family:'Liberation Sans', sans-serif;font-size:6.5px;font-weight:400;color:#8a8a8a;letter-spacing:0px;white-space:nowrap;;">Mordor Forge</div><div style="position:absolute;left:856.40px;top:383.48px;height:12px;line-height:12px;font-family:'Liberation Sans', sans-serif;font-size:6.8px;font-weight:400;color:#3a3a3a;letter-spacing:0px;white-space:nowrap;;">Ciemna Dolina 23</div><div style="position:absolute;left:856.40px;top:393.38px;height:12px;line-height:12px;font-family:'Liberation Sans', sans-serif;font-size:6.8px;font-weight:400;color:#3a3a3a;letter-spacing:0px;white-space:nowrap;;">11-224 Barad-Dûr</div><svg style="position:absolute;left:995px;top:389.14px" width="4.4" height="10" viewBox="0 0 4.4 10"><circle cx="2.1" cy="2.1" r=".95" fill="#333"/><circle cx="2.1" cy="5.15" r=".95" fill="#333"/><circle cx="2.1" cy="8.2" r=".95" fill="#333"/></svg><div style="position:absolute;left:38.00px;top:405.96px;width:970.00px;height:1.00px;background:#ededed;"></div><div style="position:absolute;left:43.90px;top:413.21px;width:8.80px;height:8.60px;background:transparent;border:1.3px solid #7a7a7a;box-sizing:border-box;border-radius:1px"></div><div style="position:absolute;left:65.60px;top:411.88px;height:12px;line-height:12px;font-family:'Liberation Sans', sans-serif;font-size:7px;font-weight:400;color:#3a3a3a;letter-spacing:0px;white-space:nowrap;;transform:scaleX(0.8819);transform-origin:0 0;">DPOK</div><div style="position:absolute;left:125.10px;top:411.71px;width:11.90px;height:11.30px;background:#aadcf4;"></div><div style="position:absolute;left:125.10px;top:422.81px;width:11.90px;height:1.90px;background:#5b9fd0;"></div><svg style="position:absolute;left:127px;top:412.71px" width="8" height="8" viewBox="0 0 8 8"><path d="M1.8 1.3L4 3.2l2.2-1.9M1.8 4L4 5.9 6.2 4" fill="none" stroke="#3b98d8" stroke-width="1.1"/></svg><div style="position:absolute;left:174.54px;top:412.13px;height:12px;line-height:12px;font-family:'Liberation Sans', sans-serif;font-size:6.3px;font-weight:400;color:#3a3a3a;letter-spacing:0px;white-space:nowrap;;">BOP</div><div style="position:absolute;left:224.80px;top:409.71px;height:12px;line-height:12px;font-family:'Liberation Sans', sans-serif;font-size:6.65px;font-weight:400;color:#3a3a3a;letter-spacing:0px;white-space:nowrap;;">Do kompletacji</div><div style="position:absolute;left:281.77px;top:409.58px;height:12px;line-height:12px;font-family:'Liberation Sans', sans-serif;font-size:7px;font-weight:700;color:#2e2e2e;letter-spacing:0px;white-space:nowrap;;">0%</div><div style="position:absolute;left:224.80px;top:421.01px;width:67.10px;height:4.00px;background:#b9d3ec;border-radius:1px"></div><div style="position:absolute;left:302.70px;top:411.88px;height:12px;line-height:12px;font-family:'Liberation Sans', sans-serif;font-size:7px;font-weight:400;color:#5a8bbf;letter-spacing:0px;white-space:nowrap;text-decoration:underline;text-decoration-color:#a3c0de;text-decoration-thickness:0.7px;text-underline-offset:0.6px;transform:scaleX(1.0745);transform-origin:0 0;"><b style="color:#2e5f92">PL</b>/2025/06/000009</div><div style="position:absolute;left:389.10px;top:411.88px;height:12px;line-height:12px;font-family:'Liberation Sans', sans-serif;font-size:7px;font-weight:400;color:#5a8bbf;letter-spacing:0px;white-space:nowrap;text-decoration:underline;text-decoration-color:#a3c0de;text-decoration-thickness:0.7px;text-underline-offset:0.6px;transform:scaleX(1.0858);transform-origin:0 0;"><b style="color:#2e5f92">WZ</b>/2025/02/000294</div><div style="position:absolute;left:475.00px;top:412.03px;height:12px;line-height:12px;font-family:'Liberation Sans', sans-serif;font-size:6.3px;font-weight:400;color:#3a3a3a;letter-spacing:0px;white-space:nowrap;;">284</div><div style="position:absolute;left:579.77px;top:412.06px;height:12px;line-height:12px;font-family:'Liberation Sans', sans-serif;font-size:6.5px;font-weight:400;color:#4a4a4a;letter-spacing:0px;white-space:nowrap;;">1</div><div style="position:absolute;left:627.88px;top:412.06px;height:12px;line-height:12px;font-family:'Liberation Sans', sans-serif;font-size:6.5px;font-weight:400;color:#4a4a4a;letter-spacing:0px;white-space:nowrap;;">6</div><div style="position:absolute;left:679.40px;top:412.06px;height:12px;line-height:12px;font-family:'Liberation Sans', sans-serif;font-size:6.5px;font-weight:400;color:#4a4a4a;letter-spacing:0px;white-space:nowrap;;">12 <span style="color:#939393;font-size:6.4px">kg</span></div><div style="position:absolute;left:742.70px;top:412.06px;height:12px;line-height:12px;font-family:'Liberation Sans', sans-serif;font-size:6.5px;font-weight:400;color:#4a4a4a;letter-spacing:0px;white-space:nowrap;;">24 <span style="color:#939393;font-size:6.4px">kg</span></div><div style="position:absolute;left:769.00px;top:406.69px;height:12px;line-height:12px;font-family:'Liberation Sans', sans-serif;font-size:6.4px;font-weight:400;color:#3f3f3f;letter-spacing:0px;white-space:nowrap;;">MORD12346</div><div style="position:absolute;left:769.00px;top:416.56px;height:12px;line-height:12px;font-family:'Liberation Sans', sans-serif;font-size:6.5px;font-weight:400;color:#8a8a8a;letter-spacing:0px;white-space:nowrap;;">Mordor Forge</div><div style="position:absolute;left:856.40px;top:406.55px;height:12px;line-height:12px;font-family:'Liberation Sans', sans-serif;font-size:6.8px;font-weight:400;color:#3a3a3a;letter-spacing:0px;white-space:nowrap;;">Ciemna Dolina 21</div><div style="position:absolute;left:856.40px;top:416.45px;height:12px;line-height:12px;font-family:'Liberation Sans', sans-serif;font-size:6.8px;font-weight:400;color:#3a3a3a;letter-spacing:0px;white-space:nowrap;;">11-222 Barad-Dûr</div><svg style="position:absolute;left:995px;top:412.21px" width="4.4" height="10" viewBox="0 0 4.4 10"><circle cx="2.1" cy="2.1" r=".95" fill="#333"/><circle cx="2.1" cy="5.15" r=".95" fill="#333"/><circle cx="2.1" cy="8.2" r=".95" fill="#333"/></svg><div style="position:absolute;left:38.00px;top:429.03px;width:970.00px;height:1.00px;background:#ededed;"></div><div style="position:absolute;left:43.90px;top:436.28px;width:8.80px;height:8.60px;background:transparent;border:1.3px solid #7a7a7a;box-sizing:border-box;border-radius:1px"></div><div style="position:absolute;left:65.60px;top:434.95px;height:12px;line-height:12px;font-family:'Liberation Sans', sans-serif;font-size:7px;font-weight:400;color:#3a3a3a;letter-spacing:0px;white-space:nowrap;;transform:scaleX(0.8819);transform-origin:0 0;">DPOK</div><div style="position:absolute;left:125.10px;top:434.78px;width:11.90px;height:11.30px;background:#f6f6f6;"></div><div style="position:absolute;left:125.10px;top:445.88px;width:11.90px;height:1.90px;background:#cbcbcb;"></div><div style="position:absolute;left:128.00px;top:437.78px;width:7.00px;height:1.00px;background:#d4d4d4;"></div><div style="position:absolute;left:128.00px;top:440.48px;width:7.00px;height:1.00px;background:#d4d4d4;"></div><div style="position:absolute;left:174.54px;top:435.20px;height:12px;line-height:12px;font-family:'Liberation Sans', sans-serif;font-size:6.3px;font-weight:400;color:#3a3a3a;letter-spacing:0px;white-space:nowrap;;">BOP</div><div style="position:absolute;left:224.80px;top:432.78px;height:12px;line-height:12px;font-family:'Liberation Sans', sans-serif;font-size:6.65px;font-weight:400;color:#3a3a3a;letter-spacing:0px;white-space:nowrap;;">Do kompletacji</div><div style="position:absolute;left:281.77px;top:432.65px;height:12px;line-height:12px;font-family:'Liberation Sans', sans-serif;font-size:7px;font-weight:700;color:#2e2e2e;letter-spacing:0px;white-space:nowrap;;">0%</div><div style="position:absolute;left:224.80px;top:444.08px;width:67.10px;height:4.00px;background:#b9d3ec;border-radius:1px"></div><div style="position:absolute;left:302.70px;top:434.95px;height:12px;line-height:12px;font-family:'Liberation Sans', sans-serif;font-size:7px;font-weight:400;color:#5a8bbf;letter-spacing:0px;white-space:nowrap;text-decoration:underline;text-decoration-color:#a3c0de;text-decoration-thickness:0.7px;text-underline-offset:0.6px;transform:scaleX(1.0745);transform-origin:0 0;"><b style="color:#2e5f92">PL</b>/2025/06/000003</div><div style="position:absolute;left:389.10px;top:434.95px;height:12px;line-height:12px;font-family:'Liberation Sans', sans-serif;font-size:7px;font-weight:400;color:#5a8bbf;letter-spacing:0px;white-space:nowrap;text-decoration:underline;text-decoration-color:#a3c0de;text-decoration-thickness:0.7px;text-underline-offset:0.6px;transform:scaleX(1.0858);transform-origin:0 0;"><b style="color:#2e5f92">WZ</b>/2025/02/000350</div><div style="position:absolute;left:475.00px;top:435.10px;height:12px;line-height:12px;font-family:'Liberation Sans', sans-serif;font-size:6.3px;font-weight:400;color:#3a3a3a;letter-spacing:0px;white-space:nowrap;;">340</div><div style="position:absolute;left:579.77px;top:435.13px;height:12px;line-height:12px;font-family:'Liberation Sans', sans-serif;font-size:6.5px;font-weight:400;color:#4a4a4a;letter-spacing:0px;white-space:nowrap;;">1</div><div style="position:absolute;left:627.88px;top:435.13px;height:12px;line-height:12px;font-family:'Liberation Sans', sans-serif;font-size:6.5px;font-weight:400;color:#4a4a4a;letter-spacing:0px;white-space:nowrap;;">1</div><div style="position:absolute;left:679.40px;top:435.13px;height:12px;line-height:12px;font-family:'Liberation Sans', sans-serif;font-size:6.5px;font-weight:400;color:#4a4a4a;letter-spacing:0px;white-space:nowrap;;">42 <span style="color:#939393;font-size:6.4px">kg</span></div><div style="position:absolute;left:742.70px;top:435.13px;height:12px;line-height:12px;font-family:'Liberation Sans', sans-serif;font-size:6.5px;font-weight:400;color:#4a4a4a;letter-spacing:0px;white-space:nowrap;;">44 <span style="color:#939393;font-size:6.4px">kg</span></div><div style="position:absolute;left:769.00px;top:429.76px;height:12px;line-height:12px;font-family:'Liberation Sans', sans-serif;font-size:6.4px;font-weight:400;color:#3f3f3f;letter-spacing:0px;white-space:nowrap;;">MORD12348</div><div style="position:absolute;left:769.00px;top:439.63px;height:12px;line-height:12px;font-family:'Liberation Sans', sans-serif;font-size:6.5px;font-weight:400;color:#8a8a8a;letter-spacing:0px;white-space:nowrap;;">Mordor Forge</div><div style="position:absolute;left:856.40px;top:429.62px;height:12px;line-height:12px;font-family:'Liberation Sans', sans-serif;font-size:6.8px;font-weight:400;color:#3a3a3a;letter-spacing:0px;white-space:nowrap;;">Ciemna Dolina 23</div><div style="position:absolute;left:856.40px;top:439.52px;height:12px;line-height:12px;font-family:'Liberation Sans', sans-serif;font-size:6.8px;font-weight:400;color:#3a3a3a;letter-spacing:0px;white-space:nowrap;;">11-224 Barad-Dûr</div><svg style="position:absolute;left:995px;top:435.28px" width="4.4" height="10" viewBox="0 0 4.4 10"><circle cx="2.1" cy="2.1" r=".95" fill="#333"/><circle cx="2.1" cy="5.15" r=".95" fill="#333"/><circle cx="2.1" cy="8.2" r=".95" fill="#333"/></svg><div style="position:absolute;left:38.00px;top:452.10px;width:970.00px;height:1.00px;background:#ededed;"></div><div style="position:absolute;left:43.90px;top:459.35px;width:8.80px;height:8.60px;background:transparent;border:1.3px solid #7a7a7a;box-sizing:border-box;border-radius:1px"></div><div style="position:absolute;left:65.60px;top:458.02px;height:12px;line-height:12px;font-family:'Liberation Sans', sans-serif;font-size:7px;font-weight:400;color:#3a3a3a;letter-spacing:0px;white-space:nowrap;;transform:scaleX(0.8819);transform-origin:0 0;">DPOK</div><div style="position:absolute;left:125.10px;top:457.85px;width:11.90px;height:11.30px;background:#f6f6f6;"></div><div style="position:absolute;left:125.10px;top:468.95px;width:11.90px;height:1.90px;background:#cbcbcb;"></div><div style="position:absolute;left:128.00px;top:460.85px;width:7.00px;height:1.00px;background:#d4d4d4;"></div><div style="position:absolute;left:128.00px;top:463.55px;width:7.00px;height:1.00px;background:#d4d4d4;"></div><div style="position:absolute;left:174.54px;top:458.27px;height:12px;line-height:12px;font-family:'Liberation Sans', sans-serif;font-size:6.3px;font-weight:400;color:#3a3a3a;letter-spacing:0px;white-space:nowrap;;">BOP</div><div style="position:absolute;left:224.80px;top:455.85px;height:12px;line-height:12px;font-family:'Liberation Sans', sans-serif;font-size:6.65px;font-weight:400;color:#3a3a3a;letter-spacing:0px;white-space:nowrap;;">Do kompletacji</div><div style="position:absolute;left:281.77px;top:455.72px;height:12px;line-height:12px;font-family:'Liberation Sans', sans-serif;font-size:7px;font-weight:700;color:#2e2e2e;letter-spacing:0px;white-space:nowrap;;">0%</div><div style="position:absolute;left:224.80px;top:467.15px;width:67.10px;height:4.00px;background:#b9d3ec;border-radius:1px"></div><div style="position:absolute;left:302.70px;top:458.02px;height:12px;line-height:12px;font-family:'Liberation Sans', sans-serif;font-size:7px;font-weight:400;color:#5a8bbf;letter-spacing:0px;white-space:nowrap;text-decoration:underline;text-decoration-color:#a3c0de;text-decoration-thickness:0.7px;text-underline-offset:0.6px;transform:scaleX(1.0745);transform-origin:0 0;"><b style="color:#2e5f92">PL</b>/2025/06/000003</div><div style="position:absolute;left:389.10px;top:458.02px;height:12px;line-height:12px;font-family:'Liberation Sans', sans-serif;font-size:7px;font-weight:400;color:#5a8bbf;letter-spacing:0px;white-space:nowrap;text-decoration:underline;text-decoration-color:#a3c0de;text-decoration-thickness:0.7px;text-underline-offset:0.6px;transform:scaleX(1.0858);transform-origin:0 0;"><b style="color:#2e5f92">WZ</b>/2025/02/000370</div><div style="position:absolute;left:475.00px;top:458.17px;height:12px;line-height:12px;font-family:'Liberation Sans', sans-serif;font-size:6.3px;font-weight:400;color:#3a3a3a;letter-spacing:0px;white-space:nowrap;;">360</div><div style="position:absolute;left:579.77px;top:458.20px;height:12px;line-height:12px;font-family:'Liberation Sans', sans-serif;font-size:6.5px;font-weight:400;color:#4a4a4a;letter-spacing:0px;white-space:nowrap;;">1</div><div style="position:absolute;left:627.88px;top:458.20px;height:12px;line-height:12px;font-family:'Liberation Sans', sans-serif;font-size:6.5px;font-weight:400;color:#4a4a4a;letter-spacing:0px;white-space:nowrap;;">1</div><div style="position:absolute;left:679.40px;top:458.20px;height:12px;line-height:12px;font-family:'Liberation Sans', sans-serif;font-size:6.5px;font-weight:400;color:#4a4a4a;letter-spacing:0px;white-space:nowrap;;">42 <span style="color:#939393;font-size:6.4px">kg</span></div><div style="position:absolute;left:742.70px;top:458.20px;height:12px;line-height:12px;font-family:'Liberation Sans', sans-serif;font-size:6.5px;font-weight:400;color:#4a4a4a;letter-spacing:0px;white-space:nowrap;;">44 <span style="color:#939393;font-size:6.4px">kg</span></div><div style="position:absolute;left:769.00px;top:452.83px;height:12px;line-height:12px;font-family:'Liberation Sans', sans-serif;font-size:6.4px;font-weight:400;color:#3f3f3f;letter-spacing:0px;white-space:nowrap;;">MORD12349</div><div style="position:absolute;left:769.00px;top:462.70px;height:12px;line-height:12px;font-family:'Liberation Sans', sans-serif;font-size:6.5px;font-weight:400;color:#8a8a8a;letter-spacing:0px;white-space:nowrap;;">Mordor Forge</div><div style="position:absolute;left:856.40px;top:452.69px;height:12px;line-height:12px;font-family:'Liberation Sans', sans-serif;font-size:6.8px;font-weight:400;color:#3a3a3a;letter-spacing:0px;white-space:nowrap;;">Ciemna Dolina 24</div><div style="position:absolute;left:856.40px;top:462.59px;height:12px;line-height:12px;font-family:'Liberation Sans', sans-serif;font-size:6.8px;font-weight:400;color:#3a3a3a;letter-spacing:0px;white-space:nowrap;;">11-225 Barad-Dûr</div><svg style="position:absolute;left:995px;top:458.35px" width="4.4" height="10" viewBox="0 0 4.4 10"><circle cx="2.1" cy="2.1" r=".95" fill="#333"/><circle cx="2.1" cy="5.15" r=".95" fill="#333"/><circle cx="2.1" cy="8.2" r=".95" fill="#333"/></svg><div style="position:absolute;left:38.00px;top:475.17px;width:970.00px;height:1.00px;background:#ededed;"></div><div style="position:absolute;left:43.90px;top:482.42px;width:8.80px;height:8.60px;background:transparent;border:1.3px solid #7a7a7a;box-sizing:border-box;border-radius:1px"></div><div style="position:absolute;left:65.60px;top:481.09px;height:12px;line-height:12px;font-family:'Liberation Sans', sans-serif;font-size:7px;font-weight:400;color:#3a3a3a;letter-spacing:0px;white-space:nowrap;;transform:scaleX(0.8819);transform-origin:0 0;">DPOK</div><div style="position:absolute;left:125.10px;top:480.92px;width:11.90px;height:11.30px;background:#f6f6f6;"></div><div style="position:absolute;left:125.10px;top:492.02px;width:11.90px;height:1.90px;background:#cbcbcb;"></div><div style="position:absolute;left:128.00px;top:483.92px;width:7.00px;height:1.00px;background:#d4d4d4;"></div><div style="position:absolute;left:128.00px;top:486.62px;width:7.00px;height:1.00px;background:#d4d4d4;"></div><div style="position:absolute;left:174.54px;top:481.34px;height:12px;line-height:12px;font-family:'Liberation Sans', sans-serif;font-size:6.3px;font-weight:400;color:#3a3a3a;letter-spacing:0px;white-space:nowrap;;">BOP</div><div style="position:absolute;left:224.80px;top:478.92px;height:12px;line-height:12px;font-family:'Liberation Sans', sans-serif;font-size:6.65px;font-weight:400;color:#3a3a3a;letter-spacing:0px;white-space:nowrap;;">Do kompletacji</div><div style="position:absolute;left:281.77px;top:478.79px;height:12px;line-height:12px;font-family:'Liberation Sans', sans-serif;font-size:7px;font-weight:700;color:#2e2e2e;letter-spacing:0px;white-space:nowrap;;">0%</div><div style="position:absolute;left:224.80px;top:490.22px;width:67.10px;height:4.00px;background:#b9d3ec;border-radius:1px"></div><div style="position:absolute;left:302.70px;top:481.09px;height:12px;line-height:12px;font-family:'Liberation Sans', sans-serif;font-size:7px;font-weight:400;color:#5a8bbf;letter-spacing:0px;white-space:nowrap;text-decoration:underline;text-decoration-color:#a3c0de;text-decoration-thickness:0.7px;text-underline-offset:0.6px;transform:scaleX(1.0745);transform-origin:0 0;"><b style="color:#2e5f92">PL</b>/2025/06/000003</div><div style="position:absolute;left:389.10px;top:481.09px;height:12px;line-height:12px;font-family:'Liberation Sans', sans-serif;font-size:7px;font-weight:400;color:#5a8bbf;letter-spacing:0px;white-space:nowrap;text-decoration:underline;text-decoration-color:#a3c0de;text-decoration-thickness:0.7px;text-underline-offset:0.6px;transform:scaleX(1.0858);transform-origin:0 0;"><b style="color:#2e5f92">WZ</b>/2025/02/000380</div><div style="position:absolute;left:475.00px;top:481.24px;height:12px;line-height:12px;font-family:'Liberation Sans', sans-serif;font-size:6.3px;font-weight:400;color:#3a3a3a;letter-spacing:0px;white-space:nowrap;;">370</div><div style="position:absolute;left:579.77px;top:481.27px;height:12px;line-height:12px;font-family:'Liberation Sans', sans-serif;font-size:6.5px;font-weight:400;color:#4a4a4a;letter-spacing:0px;white-space:nowrap;;">1</div><div style="position:absolute;left:627.88px;top:481.27px;height:12px;line-height:12px;font-family:'Liberation Sans', sans-serif;font-size:6.5px;font-weight:400;color:#4a4a4a;letter-spacing:0px;white-space:nowrap;;">1</div><div style="position:absolute;left:679.40px;top:481.27px;height:12px;line-height:12px;font-family:'Liberation Sans', sans-serif;font-size:6.5px;font-weight:400;color:#4a4a4a;letter-spacing:0px;white-space:nowrap;;">42 <span style="color:#939393;font-size:6.4px">kg</span></div><div style="position:absolute;left:742.70px;top:481.27px;height:12px;line-height:12px;font-family:'Liberation Sans', sans-serif;font-size:6.5px;font-weight:400;color:#4a4a4a;letter-spacing:0px;white-space:nowrap;;">44 <span style="color:#939393;font-size:6.4px">kg</span></div><div style="position:absolute;left:769.00px;top:475.90px;height:12px;line-height:12px;font-family:'Liberation Sans', sans-serif;font-size:6.4px;font-weight:400;color:#3f3f3f;letter-spacing:0px;white-space:nowrap;;">MORD12348</div><div style="position:absolute;left:769.00px;top:485.77px;height:12px;line-height:12px;font-family:'Liberation Sans', sans-serif;font-size:6.5px;font-weight:400;color:#8a8a8a;letter-spacing:0px;white-space:nowrap;;">Mordor Forge</div><div style="position:absolute;left:856.40px;top:475.76px;height:12px;line-height:12px;font-family:'Liberation Sans', sans-serif;font-size:6.8px;font-weight:400;color:#3a3a3a;letter-spacing:0px;white-space:nowrap;;">Ciemna Dolina 23</div><div style="position:absolute;left:856.40px;top:485.66px;height:12px;line-height:12px;font-family:'Liberation Sans', sans-serif;font-size:6.8px;font-weight:400;color:#3a3a3a;letter-spacing:0px;white-space:nowrap;;">11-224 Barad-Dûr</div><svg style="position:absolute;left:995px;top:481.42px" width="4.4" height="10" viewBox="0 0 4.4 10"><circle cx="2.1" cy="2.1" r=".95" fill="#333"/><circle cx="2.1" cy="5.15" r=".95" fill="#333"/><circle cx="2.1" cy="8.2" r=".95" fill="#333"/></svg><div style="position:absolute;left:38.00px;top:498.24px;width:970.00px;height:1.00px;background:#ededed;"></div><div style="position:absolute;left:43.90px;top:505.49px;width:8.80px;height:8.60px;background:transparent;border:1.3px solid #7a7a7a;box-sizing:border-box;border-radius:1px"></div><div style="position:absolute;left:65.60px;top:504.16px;height:12px;line-height:12px;font-family:'Liberation Sans', sans-serif;font-size:7px;font-weight:400;color:#3a3a3a;letter-spacing:0px;white-space:nowrap;;transform:scaleX(0.8819);transform-origin:0 0;">DPOK</div><div style="position:absolute;left:125.10px;top:503.99px;width:11.90px;height:11.30px;background:#f6f6f6;"></div><div style="position:absolute;left:125.10px;top:515.09px;width:11.90px;height:1.90px;background:#cbcbcb;"></div><div style="position:absolute;left:128.00px;top:506.99px;width:7.00px;height:1.00px;background:#d4d4d4;"></div><div style="position:absolute;left:128.00px;top:509.69px;width:7.00px;height:1.00px;background:#d4d4d4;"></div><div style="position:absolute;left:174.54px;top:504.41px;height:12px;line-height:12px;font-family:'Liberation Sans', sans-serif;font-size:6.3px;font-weight:400;color:#3a3a3a;letter-spacing:0px;white-space:nowrap;;">BOP</div><div style="position:absolute;left:224.80px;top:501.99px;height:12px;line-height:12px;font-family:'Liberation Sans', sans-serif;font-size:6.65px;font-weight:400;color:#3a3a3a;letter-spacing:0px;white-space:nowrap;;">Do kompletacji</div><div style="position:absolute;left:281.77px;top:501.86px;height:12px;line-height:12px;font-family:'Liberation Sans', sans-serif;font-size:7px;font-weight:700;color:#2e2e2e;letter-spacing:0px;white-space:nowrap;;">0%</div><div style="position:absolute;left:224.80px;top:513.29px;width:67.10px;height:4.00px;background:#b9d3ec;border-radius:1px"></div><div style="position:absolute;left:302.70px;top:504.16px;height:12px;line-height:12px;font-family:'Liberation Sans', sans-serif;font-size:7px;font-weight:400;color:#5a8bbf;letter-spacing:0px;white-space:nowrap;text-decoration:underline;text-decoration-color:#a3c0de;text-decoration-thickness:0.7px;text-underline-offset:0.6px;transform:scaleX(1.0745);transform-origin:0 0;"><b style="color:#2e5f92">PL</b>/2025/06/000006</div><div style="position:absolute;left:389.10px;top:504.16px;height:12px;line-height:12px;font-family:'Liberation Sans', sans-serif;font-size:7px;font-weight:400;color:#5a8bbf;letter-spacing:0px;white-space:nowrap;text-decoration:underline;text-decoration-color:#a3c0de;text-decoration-thickness:0.7px;text-underline-offset:0.6px;transform:scaleX(1.0858);transform-origin:0 0;"><b style="color:#2e5f92">WZ</b>/2025/03/000033</div><div style="position:absolute;left:475.00px;top:504.31px;height:12px;line-height:12px;font-family:'Liberation Sans', sans-serif;font-size:6.3px;font-weight:400;color:#3a3a3a;letter-spacing:0px;white-space:nowrap;;">a20</div><div style="position:absolute;left:579.77px;top:504.34px;height:12px;line-height:12px;font-family:'Liberation Sans', sans-serif;font-size:6.5px;font-weight:400;color:#4a4a4a;letter-spacing:0px;white-space:nowrap;;">1</div><div style="position:absolute;left:627.88px;top:504.34px;height:12px;line-height:12px;font-family:'Liberation Sans', sans-serif;font-size:6.5px;font-weight:400;color:#4a4a4a;letter-spacing:0px;white-space:nowrap;;">1</div><div style="position:absolute;left:679.40px;top:504.34px;height:12px;line-height:12px;font-family:'Liberation Sans', sans-serif;font-size:6.5px;font-weight:400;color:#4a4a4a;letter-spacing:0px;white-space:nowrap;;">42 <span style="color:#939393;font-size:6.4px">kg</span></div><div style="position:absolute;left:742.70px;top:504.34px;height:12px;line-height:12px;font-family:'Liberation Sans', sans-serif;font-size:6.5px;font-weight:400;color:#4a4a4a;letter-spacing:0px;white-space:nowrap;;">44 <span style="color:#939393;font-size:6.4px">kg</span></div><div style="position:absolute;left:769.00px;top:498.97px;height:12px;line-height:12px;font-family:'Liberation Sans', sans-serif;font-size:6.4px;font-weight:400;color:#3f3f3f;letter-spacing:0px;white-space:nowrap;;">MITH12355</div><div style="position:absolute;left:769.00px;top:508.84px;height:12px;line-height:12px;font-family:'Liberation Sans', sans-serif;font-size:6.5px;font-weight:400;color:#8a8a8a;letter-spacing:0px;white-space:nowrap;;">Mithril Mining Co.</div><div style="position:absolute;left:856.40px;top:498.83px;height:12px;line-height:12px;font-family:'Liberation Sans', sans-serif;font-size:6.8px;font-weight:400;color:#3a3a3a;letter-spacing:0px;white-space:nowrap;;">Rzeka Czarnego Lasu 12/2</div><div style="position:absolute;left:856.40px;top:508.73px;height:12px;line-height:12px;font-family:'Liberation Sans', sans-serif;font-size:6.8px;font-weight:400;color:#3a3a3a;letter-spacing:0px;white-space:nowrap;;">40-011 Moria</div><svg style="position:absolute;left:995px;top:504.49px" width="4.4" height="10" viewBox="0 0 4.4 10"><circle cx="2.1" cy="2.1" r=".95" fill="#333"/><circle cx="2.1" cy="5.15" r=".95" fill="#333"/><circle cx="2.1" cy="8.2" r=".95" fill="#333"/></svg><div style="position:absolute;left:38.00px;top:521.31px;width:970.00px;height:1.00px;background:#ededed;"></div><div style="position:absolute;left:43.90px;top:528.56px;width:8.80px;height:8.60px;background:transparent;border:1.3px solid #7a7a7a;box-sizing:border-box;border-radius:1px"></div><div style="position:absolute;left:65.60px;top:527.23px;height:12px;line-height:12px;font-family:'Liberation Sans', sans-serif;font-size:7px;font-weight:400;color:#3a3a3a;letter-spacing:0px;white-space:nowrap;;transform:scaleX(0.8819);transform-origin:0 0;">DPOK</div><div style="position:absolute;left:125.10px;top:527.06px;width:11.90px;height:11.30px;background:#f6f6f6;"></div><div style="position:absolute;left:125.10px;top:538.16px;width:11.90px;height:1.90px;background:#cbcbcb;"></div><div style="position:absolute;left:128.00px;top:530.06px;width:7.00px;height:1.00px;background:#d4d4d4;"></div><div style="position:absolute;left:128.00px;top:532.76px;width:7.00px;height:1.00px;background:#d4d4d4;"></div><div style="position:absolute;left:174.54px;top:527.48px;height:12px;line-height:12px;font-family:'Liberation Sans', sans-serif;font-size:6.3px;font-weight:400;color:#3a3a3a;letter-spacing:0px;white-space:nowrap;;">BOP</div><div style="position:absolute;left:224.80px;top:525.06px;height:12px;line-height:12px;font-family:'Liberation Sans', sans-serif;font-size:6.65px;font-weight:400;color:#3a3a3a;letter-spacing:0px;white-space:nowrap;;">W pakowaniu</div><div style="position:absolute;left:277.88px;top:524.93px;height:12px;line-height:12px;font-family:'Liberation Sans', sans-serif;font-size:7px;font-weight:700;color:#2e2e2e;letter-spacing:0px;white-space:nowrap;;">50%</div><div style="position:absolute;left:224.80px;top:536.36px;width:67.10px;height:4.00px;background:#b9d3ec;border-radius:1px"></div><div style="position:absolute;left:224.80px;top:536.36px;width:33.55px;height:4.00px;background:#1b63ad;border-radius:1px"></div><div style="position:absolute;left:302.70px;top:527.23px;height:12px;line-height:12px;font-family:'Liberation Sans', sans-serif;font-size:7px;font-weight:400;color:#5a8bbf;letter-spacing:0px;white-space:nowrap;text-decoration:underline;text-decoration-color:#a3c0de;text-decoration-thickness:0.7px;text-underline-offset:0.6px;transform:scaleX(1.0745);transform-origin:0 0;"><b style="color:#2e5f92">PL</b>/2025/06/000008</div><div style="position:absolute;left:389.10px;top:527.23px;height:12px;line-height:12px;font-family:'Liberation Sans', sans-serif;font-size:7px;font-weight:400;color:#5a8bbf;letter-spacing:0px;white-space:nowrap;text-decoration:underline;text-decoration-color:#a3c0de;text-decoration-thickness:0.7px;text-underline-offset:0.6px;transform:scaleX(1.0858);transform-origin:0 0;"><b style="color:#2e5f92">WZ</b>/2025/03/000056</div><div style="position:absolute;left:475.00px;top:527.38px;height:12px;line-height:12px;font-family:'Liberation Sans', sans-serif;font-size:6.3px;font-weight:400;color:#3a3a3a;letter-spacing:0px;white-space:nowrap;;">a43</div><div style="position:absolute;left:579.77px;top:527.41px;height:12px;line-height:12px;font-family:'Liberation Sans', sans-serif;font-size:6.5px;font-weight:400;color:#4a4a4a;letter-spacing:0px;white-space:nowrap;;">1</div><div style="position:absolute;left:627.88px;top:527.41px;height:12px;line-height:12px;font-family:'Liberation Sans', sans-serif;font-size:6.5px;font-weight:400;color:#4a4a4a;letter-spacing:0px;white-space:nowrap;;">8</div><div style="position:absolute;left:683.03px;top:527.41px;height:12px;line-height:12px;font-family:'Liberation Sans', sans-serif;font-size:6.5px;font-weight:400;color:#4a4a4a;letter-spacing:0px;white-space:nowrap;;">8 <span style="color:#939393;font-size:6.4px">kg</span></div><div style="position:absolute;left:742.70px;top:527.41px;height:12px;line-height:12px;font-family:'Liberation Sans', sans-serif;font-size:6.5px;font-weight:400;color:#4a4a4a;letter-spacing:0px;white-space:nowrap;;">24 <span style="color:#939393;font-size:6.4px">kg</span></div><div style="position:absolute;left:769.00px;top:522.04px;height:12px;line-height:12px;font-family:'Liberation Sans', sans-serif;font-size:6.4px;font-weight:400;color:#3f3f3f;letter-spacing:0px;white-space:nowrap;;">HOB12348</div><div style="position:absolute;left:769.00px;top:531.91px;height:12px;line-height:12px;font-family:'Liberation Sans', sans-serif;font-size:6.5px;font-weight:400;color:#8a8a8a;letter-spacing:0px;white-space:nowrap;;">Hobbiton Trading</div><div style="position:absolute;left:856.40px;top:521.90px;height:12px;line-height:12px;font-family:'Liberation Sans', sans-serif;font-size:6.8px;font-weight:400;color:#3a3a3a;letter-spacing:0px;white-space:nowrap;;">Pod Dębem 12/4</div><div style="position:absolute;left:856.40px;top:531.80px;height:12px;line-height:12px;font-family:'Liberation Sans', sans-serif;font-size:6.8px;font-weight:400;color:#3a3a3a;letter-spacing:0px;white-space:nowrap;;">60-004 Hobbiton</div><svg style="position:absolute;left:995px;top:527.56px" width="4.4" height="10" viewBox="0 0 4.4 10"><circle cx="2.1" cy="2.1" r=".95" fill="#333"/><circle cx="2.1" cy="5.15" r=".95" fill="#333"/><circle cx="2.1" cy="8.2" r=".95" fill="#333"/></svg><div style="position:absolute;left:983.30px;top:107.00px;width:0.80px;height:429.40px;background:#f7f7f7;"></div><div style="position:absolute;left:33.50px;top:536.40px;width:985.00px;height:25.60px;background:#ffffff;border-radius:0 0 3px 3px"></div><div style="position:absolute;left:1009.70px;top:84.00px;width:4.50px;height:453.00px;background:#f1f1f1;"></div><div style="position:absolute;left:1009.70px;top:84.00px;width:4.50px;height:296.00px;background:#1d74d4;border-radius:1px"></div><div style="position:absolute;left:38.00px;top:536.40px;width:970.00px;height:4.60px;background:#f1f1f1;"></div><div style="position:absolute;left:38.00px;top:536.40px;width:514.00px;height:4.60px;background:#1d74d4;border-radius:0 1px 1px 0"></div><svg style="position:absolute;left:45px;top:545.5px" width="9" height="9" viewBox="0 0 9 9"><path d="M1 1.8h3M5 1.8h3M1 4.4h7M1 7h3M5 7h3M4.5 1v7" fill="none" stroke="#6a8db8" stroke-width=".9"/></svg><div style="position:absolute;left:60.80px;top:543.00px;width:0.80px;height:16.00px;background:#ececec;"></div><div style="position:absolute;left:65.80px;top:544.12px;height:12px;line-height:12px;font-family:'Liberation Sans', sans-serif;font-size:6px;font-weight:400;color:#555;letter-spacing:0px;white-space:nowrap;;transform:scaleX(1.0357);transform-origin:0 0;">Wczytano: <b style="color:#2f6ca8">29</b> z <b style="color:#2f6ca8">29</b> pozycji</div><div style="position:absolute;left:141.30px;top:543.00px;width:0.80px;height:16.00px;background:#ececec;"></div><div style="position:absolute;left:146.40px;top:544.12px;height:12px;line-height:12px;font-family:'Liberation Sans', sans-serif;font-size:6px;font-weight:400;color:#555;letter-spacing:0px;white-space:nowrap;;transform:scaleX(1.0315);transform-origin:0 0;">Zaznaczono: <b style="color:#2f6ca8">0</b> z <b style="color:#2f6ca8">29</b> pozycji</div><div style="position:absolute;left:868.80px;top:544.12px;height:12px;line-height:12px;font-family:'Liberation Sans', sans-serif;font-size:6px;font-weight:400;color:#9a9a9a;letter-spacing:0px;white-space:nowrap;;transform:scaleX(1.0355);transform-origin:0 0;">Przewijaj tabelę w bok:</div><div style="position:absolute;left:933.70px;top:545.20px;width:19.30px;height:9.80px;background:#fafafa;border:0.8px solid #e2e2e2;box-sizing:border-box;border-radius:1.5px"></div><div style="position:absolute;left:935.60px;top:544.26px;height:12px;line-height:12px;font-family:'Liberation Sans', sans-serif;font-size:5.6px;font-weight:700;color:#8a8a8a;letter-spacing:0px;white-space:nowrap;;transform:scaleX(0.9461);transform-origin:0 0;">SHIFT</div><div style="position:absolute;left:955.24px;top:544.12px;height:12px;line-height:12px;font-family:'Liberation Sans', sans-serif;font-size:6px;font-weight:400;color:#9a9a9a;letter-spacing:0px;white-space:nowrap;;">+</div><div style="position:absolute;left:961.00px;top:545.20px;width:46.40px;height:9.80px;background:#fafafa;border:0.8px solid #e2e2e2;box-sizing:border-box;border-radius:1.5px"></div><div style="position:absolute;left:963.00px;top:544.26px;height:12px;line-height:12px;font-family:'Liberation Sans', sans-serif;font-size:5.6px;font-weight:700;color:#8a8a8a;letter-spacing:0px;white-space:nowrap;;transform:scaleX(0.9675);transform-origin:0 0;">SCROLL MYSZY</div>
</body></html>
